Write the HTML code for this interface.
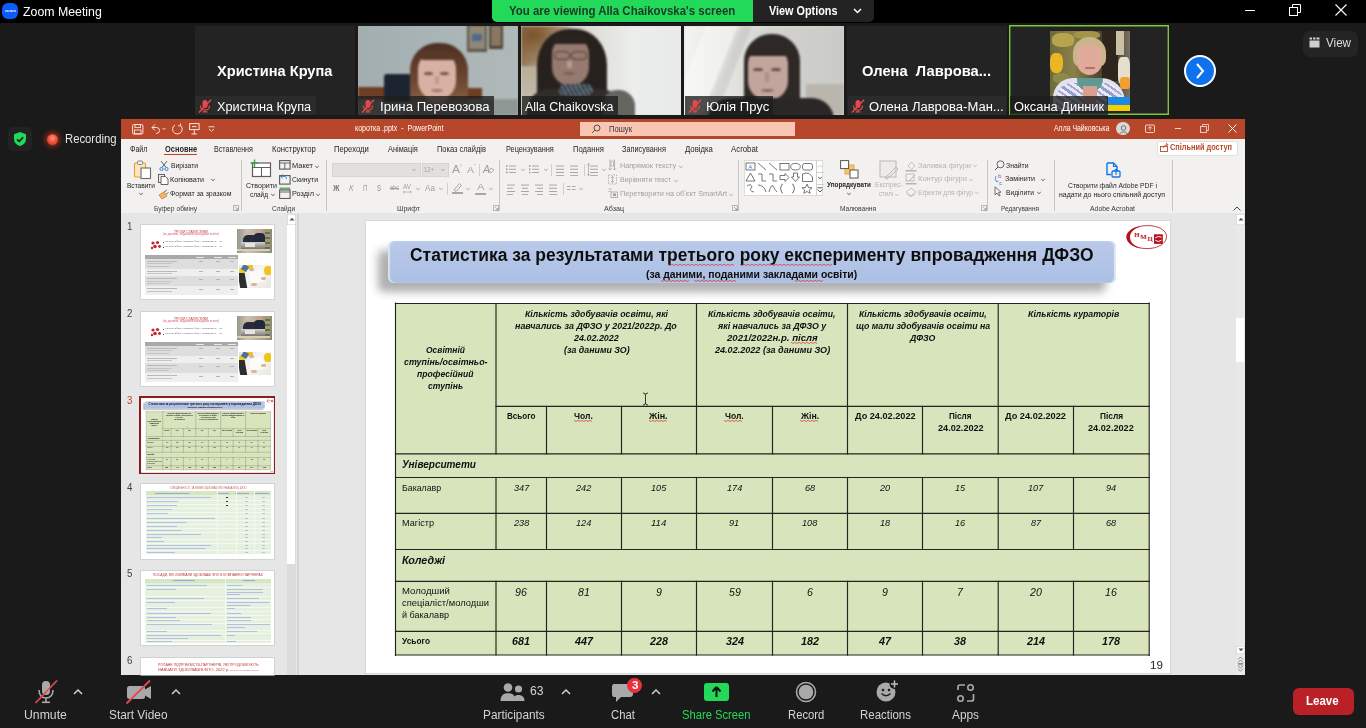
<!DOCTYPE html><html><head><meta charset="utf-8"><style>
html,body{margin:0;padding:0;}
body{width:1366px;height:728px;overflow:hidden;position:relative;background:#1a1a1a;font-family:"Liberation Sans",sans-serif;}
span{display:inline-block;}
</style></head><body>
<div style="position:absolute;left:0px;top:0px;width:1366px;height:23px;background:#000;"></div>
<div style="position:absolute;left:2px;top:3px;width:16px;height:16px;border-radius:6px;background:#0b5cff;"></div>
<span style="transform:scaleX(1.0523);position:absolute;left:4.5px;top:9.04px;font-family:'Liberation Sans', sans-serif;font-size:4px;line-height:4px;color:#fff;font-weight:700;white-space:nowrap;font-style:normal;transform-origin:0 0;">zoom</span>
<span style="transform:scaleX(1.0024);position:absolute;left:23px;top:5.57px;font-family:'Liberation Sans', sans-serif;font-size:12.3px;line-height:12.3px;color:#ffffff;font-weight:400;white-space:nowrap;font-style:normal;transform-origin:0 0;">Zoom Meeting</span>
<div style="position:absolute;left:492px;top:0;width:261px;height:22px;background:#23d959;border-bottom-left-radius:5px;"></div>
<span style="transform:scaleX(0.9319);position:absolute;left:509.3px;top:4.97px;font-family:'Liberation Sans', sans-serif;font-size:12.3px;line-height:12.3px;color:#1d3a26;font-weight:700;white-space:nowrap;font-style:normal;transform-origin:0 0;">You are viewing Alla Chaikovska&#39;s screen</span>
<div style="position:absolute;left:753px;top:0;width:121px;height:22px;background:#232323;border-bottom-right-radius:5px;"></div>
<span style="transform:scaleX(0.8819);position:absolute;left:769.3px;top:4.97px;font-family:'Liberation Sans', sans-serif;font-size:12.3px;line-height:12.3px;color:#ffffff;font-weight:700;white-space:nowrap;font-style:normal;transform-origin:0 0;">View Options</span>
<svg style="position:absolute;left:853px;top:8px;" width="9" height="6" viewBox="0 0 9 6"><polyline points="1,1 4.5,4.5 8,1" fill="none" stroke="#fff" stroke-width="1.5"/></svg>
<div style="position:absolute;left:1245px;top:10px;width:10px;height:1px;background:#fff;"></div>
<svg style="position:absolute;left:1289px;top:4px;" width="12" height="12" viewBox="0 0 12 12"><rect x="0.5" y="3.5" width="8" height="8" fill="none" stroke="#fff" stroke-width="1"/><polyline points="3.5,3.5 3.5,0.5 11.5,0.5 11.5,8.5 8.5,8.5" fill="none" stroke="#fff" stroke-width="1"/></svg>
<svg style="position:absolute;left:1335px;top:4px;" width="12" height="12" viewBox="0 0 12 12"><path d="M0.5 0.5 L11.5 11.5 M11.5 0.5 L0.5 11.5" stroke="#fff" stroke-width="1.1"/></svg>
<div style="position:absolute;left:8px;top:127px;width:24px;height:24px;border-radius:5px;background:#222;"></div>
<svg style="position:absolute;left:13px;top:131px;" width="14" height="16" viewBox="0 0 14 16"><path d="M7 1 L13 3.3 L13 8 C13 11.5 10.5 14 7 15 C3.5 14 1 11.5 1 8 L1 3.3 Z" fill="#23d959"/><polyline points="4,8.3 6.2,10.4 10.2,6.3" fill="none" stroke="#1a1a1a" stroke-width="1.6"/></svg>
<div style="position:absolute;left:46.5px;top:133.5px;width:11px;height:11px;border-radius:50%;background:radial-gradient(circle at 50% 40%,#ff9a86 0%,#f0503c 45%,#d8321f 100%);box-shadow:0 0 5px 2px rgba(220,60,20,0.55);"></div>
<span style="transform:scaleX(0.9038);position:absolute;left:64.5px;top:133.47px;font-family:'Liberation Sans', sans-serif;font-size:12.5px;line-height:12.5px;color:#e6e6e6;font-weight:400;white-space:nowrap;font-style:normal;transform-origin:0 0;">Recording</span>
<div style="position:absolute;left:0px;top:675px;width:1366px;height:53px;background:#1a1a1a;"></div>
<svg style="position:absolute;left:34px;top:679px;" width="26" height="26" viewBox="0 0 26 26"><rect x="8" y="2" width="8" height="14" rx="4" fill="#a9a9a9"/><path d="M5 11 C5 16 8 19 12 19 C16 19 19 16 19 11" fill="none" stroke="#a9a9a9" stroke-width="1.6"/><rect x="11.2" y="19" width="1.6" height="4" fill="#a9a9a9"/><rect x="8" y="22.5" width="8" height="1.6" fill="#a9a9a9"/><line x1="1.5" y1="24" x2="23" y2="1.5" stroke="#e5484d" stroke-width="1.8"/></svg>
<svg style="position:absolute;left:73px;top:689px;" width="10" height="6" viewBox="0 0 10 6"><polyline points="1,5 5,1 9,5" fill="none" stroke="#cfcfcf" stroke-width="1.5"/></svg>
<span style="transform:scaleX(0.9799);position:absolute;left:23.9px;top:709.17px;font-family:'Liberation Sans', sans-serif;font-size:12.5px;line-height:12.5px;color:#d4d4d4;font-weight:400;white-space:nowrap;font-style:normal;transform-origin:0 0;">Unmute</span>
<svg style="position:absolute;left:125px;top:679px;" width="28" height="26" viewBox="0 0 28 26"><rect x="2" y="7" width="18" height="13" rx="2.5" fill="#a9a9a9"/><path d="M20 10.5 L26 7 L26 20 L20 16.5 Z" fill="#a9a9a9"/><line x1="1.5" y1="24.5" x2="25" y2="1.5" stroke="#e5484d" stroke-width="1.8"/></svg>
<svg style="position:absolute;left:171px;top:689px;" width="10" height="6" viewBox="0 0 10 6"><polyline points="1,5 5,1 9,5" fill="none" stroke="#cfcfcf" stroke-width="1.5"/></svg>
<span style="transform:scaleX(0.9493);position:absolute;left:109.3px;top:709.17px;font-family:'Liberation Sans', sans-serif;font-size:12.5px;line-height:12.5px;color:#d4d4d4;font-weight:400;white-space:nowrap;font-style:normal;transform-origin:0 0;">Start Video</span>
<svg style="position:absolute;left:499px;top:682px;" width="28" height="20" viewBox="0 0 28 20"><circle cx="9" cy="5.5" r="4.3" fill="#a9a9a9"/><circle cx="19.5" cy="7" r="3.6" fill="#a9a9a9"/><path d="M1.5 19 C1.5 13 5 11.3 9 11.3 C13 11.3 16.5 13 16.5 19 Z" fill="#a9a9a9"/><path d="M14 19 C14 15 16 13 19.5 13 C23 13 25.5 15 25.5 19 Z" fill="#a9a9a9"/></svg>
<span style="transform:scaleX(0.9708);position:absolute;left:529.5px;top:684.88px;font-family:'Liberation Sans', sans-serif;font-size:12.5px;line-height:12.5px;color:#d4d4d4;font-weight:400;white-space:nowrap;font-style:normal;transform-origin:0 0;">63</span>
<svg style="position:absolute;left:561px;top:689px;" width="10" height="6" viewBox="0 0 10 6"><polyline points="1,5 5,1 9,5" fill="none" stroke="#cfcfcf" stroke-width="1.5"/></svg>
<span style="transform:scaleX(0.9447);position:absolute;left:482.5px;top:709.17px;font-family:'Liberation Sans', sans-serif;font-size:12.5px;line-height:12.5px;color:#d4d4d4;font-weight:400;white-space:nowrap;font-style:normal;transform-origin:0 0;">Participants</span>
<svg style="position:absolute;left:611px;top:682px;" width="24" height="22" viewBox="0 0 24 22"><path d="M3 2 L19 2 Q22 2 22 5 L22 12 Q22 15 19 15 L10 15 L5 20 L5 15 L3 15 Q1 15 1 12 L1 5 Q1 2 3 2 Z" fill="#a9a9a9"/></svg>
<div style="position:absolute;left:627px;top:677.5px;width:15px;height:15px;border-radius:50%;background:#e8313a;"></div>
<span style="transform:scaleX(1.1123);position:absolute;left:631.5px;top:679.86px;font-family:'Liberation Sans', sans-serif;font-size:10.5px;line-height:10.5px;color:#fff;font-weight:700;white-space:nowrap;font-style:normal;transform-origin:0 0;">3</span>
<svg style="position:absolute;left:651px;top:689px;" width="10" height="6" viewBox="0 0 10 6"><polyline points="1,5 5,1 9,5" fill="none" stroke="#cfcfcf" stroke-width="1.5"/></svg>
<span style="transform:scaleX(0.9013);position:absolute;left:611.2px;top:709.17px;font-family:'Liberation Sans', sans-serif;font-size:12.5px;line-height:12.5px;color:#d4d4d4;font-weight:400;white-space:nowrap;font-style:normal;transform-origin:0 0;">Chat</span>
<div style="position:absolute;left:704px;top:683px;width:25px;height:18px;border-radius:3px;background:#23d959;"></div>
<svg style="position:absolute;left:710px;top:685px;" width="13" height="14" viewBox="0 0 13 14"><path d="M6.5 2 L10.5 6.5 M6.5 2 L2.5 6.5 M6.5 2 L6.5 12" stroke="#111" stroke-width="2" fill="none"/></svg>
<span style="transform:scaleX(0.8962);position:absolute;left:682.2px;top:709.17px;font-family:'Liberation Sans', sans-serif;font-size:12.5px;line-height:12.5px;color:#23d959;font-weight:400;white-space:nowrap;font-style:normal;transform-origin:0 0;">Share Screen</span>
<svg style="position:absolute;left:795px;top:681px;" width="22" height="22" viewBox="0 0 22 22"><circle cx="11" cy="11" r="9.5" fill="none" stroke="#a9a9a9" stroke-width="1.6"/><circle cx="11" cy="11" r="7.3" fill="#a9a9a9"/></svg>
<span style="transform:scaleX(0.9008);position:absolute;left:787.5px;top:709.17px;font-family:'Liberation Sans', sans-serif;font-size:12.5px;line-height:12.5px;color:#d4d4d4;font-weight:400;white-space:nowrap;font-style:normal;transform-origin:0 0;">Record</span>
<svg style="position:absolute;left:876px;top:679px;" width="24" height="24" viewBox="0 0 24 24"><circle cx="10" cy="13" r="9.5" fill="#a9a9a9"/><circle cx="7" cy="11" r="1.3" fill="#1a1a1a"/><circle cx="13" cy="11" r="1.3" fill="#1a1a1a"/><path d="M5.5 14.5 Q10 19 14.5 14.5" stroke="#1a1a1a" stroke-width="1.4" fill="none"/><circle cx="18.5" cy="5" r="5" fill="#1a1a1a"/><path d="M18.5 1.5 L18.5 8.5 M15 5 L22 5" stroke="#bdbdbd" stroke-width="1.5"/></svg>
<span style="transform:scaleX(0.9156);position:absolute;left:860.3px;top:709.17px;font-family:'Liberation Sans', sans-serif;font-size:12.5px;line-height:12.5px;color:#d4d4d4;font-weight:400;white-space:nowrap;font-style:normal;transform-origin:0 0;">Reactions</span>
<svg style="position:absolute;left:956px;top:683px;" width="20" height="20" viewBox="0 0 20 20"><path d="M2 7 L2 4 Q2 2 4 2 L9 2" fill="none" stroke="#a9a9a9" stroke-width="1.7"/><path d="M17.5 11 L17.5 16 Q17.5 18 15.5 18 L11 18" fill="none" stroke="#a9a9a9" stroke-width="1.7"/><circle cx="14.5" cy="4.5" r="2.7" fill="none" stroke="#a9a9a9" stroke-width="1.6"/><circle cx="4.5" cy="15.5" r="2.7" fill="none" stroke="#a9a9a9" stroke-width="1.6"/></svg>
<span style="transform:scaleX(0.9474);position:absolute;left:952.3px;top:709.17px;font-family:'Liberation Sans', sans-serif;font-size:12.5px;line-height:12.5px;color:#d4d4d4;font-weight:400;white-space:nowrap;font-style:normal;transform-origin:0 0;">Apps</span>
<div style="position:absolute;left:1293px;top:688px;width:61px;height:27px;border-radius:6px;background:#b92126;"></div>
<span style="transform:scaleX(0.9609);position:absolute;left:1306.3px;top:694.82px;font-family:'Liberation Sans', sans-serif;font-size:12px;line-height:12px;color:#fff;font-weight:700;white-space:nowrap;font-style:normal;transform-origin:0 0;">Leave</span>
<div style="position:absolute;left:195px;top:26px;width:160px;height:89px;background:#232323;"></div>
<span style="transform:scaleX(1.0054);position:absolute;left:216.9px;top:63.70px;font-family:'Liberation Sans', sans-serif;font-size:14.5px;line-height:14.5px;color:#fff;font-weight:700;white-space:nowrap;font-style:normal;transform-origin:0 0;">Христина Крупа</span>
<div style="position:absolute;left:195px;top:96px;width:121px;height:19px;background:#2b2b2b;"></div>
<svg style="position:absolute;left:198px;top:99px;" width="14" height="14" viewBox="0 0 14 14"><rect x="4.5" y="1" width="5" height="8" rx="2.5" fill="#e5484d"/><path d="M2.5 6.5 C2.5 9.5 4.5 11 7 11 C9.5 11 11.5 9.5 11.5 6.5" fill="none" stroke="#e5484d" stroke-width="1.2"/><rect x="6.4" y="11" width="1.2" height="2" fill="#e5484d"/><rect x="4.5" y="12.3" width="5" height="1.2" fill="#e5484d"/><line x1="1" y1="13.5" x2="13" y2="0.8" stroke="#e5484d" stroke-width="1.5"/></svg>
<span style="transform:scaleX(1.0159);position:absolute;left:216.9px;top:100.97px;font-family:'Liberation Sans', sans-serif;font-size:12.5px;line-height:12.5px;color:#fff;font-weight:400;white-space:nowrap;font-style:normal;transform-origin:0 0;">Христина Крупа</span>
<div style="position:absolute;left:358px;top:26px;width:160px;height:89px;overflow:hidden;background:#a7b2ae;"><div style="position:absolute;left:-4px;top:-4px;width:168px;height:97px;filter:blur(1px);"><div style="position:absolute;left:4px;top:4px;width:160px;height:89px;">
<div style="position:absolute;left:0;top:0;width:160px;height:89px;background:linear-gradient(90deg,#a3aeb1 0%,#aab5b7 55%,#b0b9b9 100%);"></div>
<div style="position:absolute;left:109px;top:-2px;width:20px;height:28px;background:#5e564a;"></div>
<div style="position:absolute;left:111px;top:0px;width:16px;height:23px;background:#8d8878;"></div>
<div style="position:absolute;left:114px;top:8px;width:10px;height:7px;background:#4f6a8c;"></div>
<div style="position:absolute;left:131px;top:-2px;width:14px;height:25px;background:#4e4438;"></div>
<div style="position:absolute;left:133px;top:0px;width:10px;height:20px;background:#8a7762;"></div>
<div style="position:absolute;left:0;top:61px;width:60px;height:12px;background:#6e3e24;"></div>
<div style="position:absolute;left:100px;top:62px;width:24px;height:11px;background:#6e3e24;"></div>
<div style="position:absolute;left:0;top:73px;width:160px;height:16px;background:#8f9794;"></div>
<div style="position:absolute;left:26px;top:48px;width:27px;height:28px;background:#1c2331;border-radius:3px 3px 0 0;"></div>
<div style="position:absolute;left:52px;top:17px;width:58px;height:76px;background:linear-gradient(180deg,#4d2f22 0%,#6a4430 45%,#9b6e50 100%);border-radius:27px 27px 10px 10px;"></div>
<div style="position:absolute;left:60px;top:26px;width:38px;height:48px;background:#d7b2a4;border-radius:17px 17px 19px 19px;"></div>
<div style="position:absolute;left:62px;top:25px;width:34px;height:9px;background:#5a3828;border-radius:17px 17px 4px 14px;"></div>
<div style="position:absolute;left:66px;top:46px;width:9px;height:3px;background:#6e5048;border-radius:50%;"></div>
<div style="position:absolute;left:82px;top:46px;width:9px;height:3px;background:#6e5048;border-radius:50%;"></div>
<div style="position:absolute;left:77px;top:50px;width:4px;height:8px;background:#c89a8a;"></div>
<div style="position:absolute;left:73px;top:63px;width:12px;height:3px;background:#a86e68;border-radius:50%;"></div>
<div style="position:absolute;left:44px;top:74px;width:72px;height:20px;background:#7d7774;border-radius:16px 16px 0 0;"></div>
<div style="position:absolute;left:68px;top:70px;width:22px;height:8px;background:#c79a8a;border-radius:0 0 10px 10px;"></div>
</div></div>
</div>
<div style="position:absolute;left:358px;top:96px;width:136px;height:19px;background:rgba(30,30,30,0.78);"></div>
<svg style="position:absolute;left:361px;top:99px;" width="14" height="14" viewBox="0 0 14 14"><rect x="4.5" y="1" width="5" height="8" rx="2.5" fill="#e5484d"/><path d="M2.5 6.5 C2.5 9.5 4.5 11 7 11 C9.5 11 11.5 9.5 11.5 6.5" fill="none" stroke="#e5484d" stroke-width="1.2"/><rect x="6.4" y="11" width="1.2" height="2" fill="#e5484d"/><rect x="4.5" y="12.3" width="5" height="1.2" fill="#e5484d"/><line x1="1" y1="13.5" x2="13" y2="0.8" stroke="#e5484d" stroke-width="1.5"/></svg>
<span style="transform:scaleX(1.0550);position:absolute;left:380px;top:100.97px;font-family:'Liberation Sans', sans-serif;font-size:12.5px;line-height:12.5px;color:#fff;font-weight:400;white-space:nowrap;font-style:normal;transform-origin:0 0;">Ірина Перевозова</span>
<div style="position:absolute;left:521px;top:26px;width:160px;height:89px;overflow:hidden;background:#dfe1dd;"><div style="position:absolute;left:-4px;top:-4px;width:168px;height:97px;filter:blur(1.2px);"><div style="position:absolute;left:4px;top:4px;width:160px;height:89px;">
<div style="position:absolute;left:0;top:0;width:160px;height:89px;background:linear-gradient(90deg,#8f7656 0%,#b8a78c 18%,#dcdcd6 42%,#eceeec 70%,#e8ebea 100%);"></div>
<div style="position:absolute;left:0;top:0;width:50px;height:36px;background:radial-gradient(ellipse at 25% 25%,#7a552e 0%,rgba(140,100,60,0.5) 50%,rgba(160,130,90,0) 85%);"></div>
<div style="position:absolute;left:0;top:40px;width:25px;height:49px;background:linear-gradient(180deg,#b7ad98 0%,#c9c3b6 100%);"></div>
<div style="position:absolute;left:16px;top:3px;width:70px;height:90px;background:#27211e;border-radius:45% 45% 12px 12px / 40% 40% 12px 12px;"></div>
<div style="position:absolute;left:31px;top:12px;width:37px;height:48px;background:#967a6f;border-radius:16px 16px 19px 19px;"></div>
<div style="position:absolute;left:31px;top:9px;width:34px;height:9px;background:#2a2320;border-radius:16px 16px 6px 12px;"></div>
<div style="position:absolute;left:33px;top:25px;width:14px;height:7px;border:1px solid #4e3d36;border-radius:40%;"></div>
<div style="position:absolute;left:50px;top:25px;width:14px;height:7px;border:1px solid #4e3d36;border-radius:40%;"></div>
<div style="position:absolute;left:46px;top:35px;width:5px;height:7px;background:#b89a8e;"></div>
<div style="position:absolute;left:42px;top:46px;width:12px;height:3px;background:#7d5a55;border-radius:50%;"></div>
<div style="position:absolute;left:6px;top:63px;width:96px;height:30px;background:#302d2b;border-radius:22px 22px 0 0;"></div>
<div style="position:absolute;left:82px;top:64px;width:32px;height:30px;background:#66645f;border-radius:14px 16px 0 0;"></div>
<div style="position:absolute;left:38px;top:58px;width:34px;height:12px;background:repeating-linear-gradient(60deg,#2b343c 0 2px,#6b7886 2px 4px);border-radius:6px;"></div>
</div></div>
</div>
<div style="position:absolute;left:522px;top:96px;width:96px;height:19px;background:rgba(30,30,30,0.78);"></div>
<span style="transform:scaleX(0.9951);position:absolute;left:525px;top:100.97px;font-family:'Liberation Sans', sans-serif;font-size:12.5px;line-height:12.5px;color:#fff;font-weight:400;white-space:nowrap;font-style:normal;transform-origin:0 0;">Alla Chaikovska</span>
<div style="position:absolute;left:684px;top:26px;width:160px;height:89px;overflow:hidden;background:#d6d6d3;"><div style="position:absolute;left:-4px;top:-4px;width:168px;height:97px;filter:blur(1.1px);"><div style="position:absolute;left:4px;top:4px;width:160px;height:89px;">
<div style="position:absolute;left:0;top:0;width:160px;height:89px;background:linear-gradient(90deg,#f3f3f1 0%,#e6e6e3 25%,#d2d2cf 55%,#cacac6 100%);"></div>
<div style="position:absolute;left:4px;top:0;width:36px;height:89px;background:rgba(255,255,255,0.4);transform:skewX(-22deg);"></div>
<div style="position:absolute;left:36px;top:0;width:14px;height:89px;background:rgba(160,160,155,0.25);transform:skewX(-22deg);"></div>
<div style="position:absolute;left:122px;top:58px;width:38px;height:31px;background:#bab6ad;"></div>
<div style="position:absolute;left:60px;top:8px;width:56px;height:84px;background:#2e2927;border-radius:27px 27px 8px 8px;"></div>
<div style="position:absolute;left:64px;top:22px;width:40px;height:52px;background:#c2a69d;border-radius:16px 16px 19px 19px;"></div>
<div style="position:absolute;left:64px;top:20px;width:40px;height:10px;background:#2e2927;border-radius:20px 20px 10px 10px;"></div>
<div style="position:absolute;left:69px;top:42px;width:10px;height:3px;background:#5e4a45;border-radius:50%;"></div>
<div style="position:absolute;left:87px;top:42px;width:10px;height:3px;background:#5e4a45;border-radius:50%;"></div>
<div style="position:absolute;left:81px;top:46px;width:4px;height:10px;background:#b09088;"></div>
<div style="position:absolute;left:77px;top:63px;width:13px;height:3px;background:#8a625c;border-radius:50%;"></div>
<div style="position:absolute;left:24px;top:72px;width:126px;height:22px;background:#2a2726;border-radius:24px 24px 0 0;"></div>
</div></div>
</div>
<div style="position:absolute;left:685px;top:96px;width:88px;height:19px;background:rgba(30,30,30,0.78);"></div>
<svg style="position:absolute;left:688px;top:99px;" width="14" height="14" viewBox="0 0 14 14"><rect x="4.5" y="1" width="5" height="8" rx="2.5" fill="#e5484d"/><path d="M2.5 6.5 C2.5 9.5 4.5 11 7 11 C9.5 11 11.5 9.5 11.5 6.5" fill="none" stroke="#e5484d" stroke-width="1.2"/><rect x="6.4" y="11" width="1.2" height="2" fill="#e5484d"/><rect x="4.5" y="12.3" width="5" height="1.2" fill="#e5484d"/><line x1="1" y1="13.5" x2="13" y2="0.8" stroke="#e5484d" stroke-width="1.5"/></svg>
<span style="transform:scaleX(1.0438);position:absolute;left:705.8px;top:100.97px;font-family:'Liberation Sans', sans-serif;font-size:12.5px;line-height:12.5px;color:#fff;font-weight:400;white-space:nowrap;font-style:normal;transform-origin:0 0;">Юлія Прус</span>
<div style="position:absolute;left:847px;top:26px;width:160px;height:89px;background:#232323;"></div>
<span style="transform:scaleX(1.0145);position:absolute;left:862px;top:63.70px;font-family:'Liberation Sans', sans-serif;font-size:14.5px;line-height:14.5px;color:#fff;font-weight:700;white-space:nowrap;font-style:normal;transform-origin:0 0;">Олена&nbsp; Лаврова...</span>
<div style="position:absolute;left:848px;top:96px;width:158px;height:19px;background:#2b2b2b;"></div>
<svg style="position:absolute;left:851px;top:99px;" width="14" height="14" viewBox="0 0 14 14"><rect x="4.5" y="1" width="5" height="8" rx="2.5" fill="#e5484d"/><path d="M2.5 6.5 C2.5 9.5 4.5 11 7 11 C9.5 11 11.5 9.5 11.5 6.5" fill="none" stroke="#e5484d" stroke-width="1.2"/><rect x="6.4" y="11" width="1.2" height="2" fill="#e5484d"/><rect x="4.5" y="12.3" width="5" height="1.2" fill="#e5484d"/><line x1="1" y1="13.5" x2="13" y2="0.8" stroke="#e5484d" stroke-width="1.5"/></svg>
<span style="transform:scaleX(1.0418);position:absolute;left:869px;top:100.97px;font-family:'Liberation Sans', sans-serif;font-size:12.5px;line-height:12.5px;color:#fff;font-weight:400;white-space:nowrap;font-style:normal;transform-origin:0 0;">Олена Лаврова-Ман...</span>
<div style="position:absolute;left:1009px;top:25px;width:160px;height:90px;border:1px solid #7ec63a;background:#232323;box-sizing:border-box;box-shadow:inset 0 0 0 0.4px #7ec63a;"></div>
<div style="position:absolute;left:1050px;top:31px;width:80px;height:80px;overflow:hidden;background:#4a4632;">
<div style="position:absolute;left:-4px;top:-4px;width:88px;height:88px;filter:blur(0.7px);"><div style="position:absolute;left:4px;top:4px;width:80px;height:80px;">
<div style="position:absolute;left:0;top:0;width:80px;height:80px;background:linear-gradient(90deg,#6e6a3e 0%,#8c8048 30%,#5c5238 55%,#3a3024 75%,#7a7262 100%);"></div>
<div style="position:absolute;left:2px;top:2px;width:22px;height:14px;background:#b7a54e;border-radius:40%;"></div>
<div style="position:absolute;left:24px;top:0px;width:26px;height:8px;background:#a09548;border-radius:40%;"></div>
<div style="position:absolute;left:0;top:22px;width:13px;height:20px;background:#eab722;border-radius:40%;"></div>
<div style="position:absolute;left:3px;top:42px;width:16px;height:10px;background:#8c8a4a;border-radius:40%;"></div>
<div style="position:absolute;left:52px;top:0;width:16px;height:50px;background:#2e261c;"></div>
<div style="position:absolute;left:66px;top:0;width:8px;height:24px;background:#c9c0a6;"></div>
<div style="position:absolute;left:68px;top:26px;width:12px;height:28px;background:#e6dfcf;border-radius:30%;"></div>
<div style="position:absolute;left:70px;top:46px;width:10px;height:12px;background:#f0a030;border-radius:30%;"></div>
<div style="position:absolute;left:23px;top:6px;width:33px;height:30px;background:#c9b58c;border-radius:16px 16px 8px 8px;"></div>
<div style="position:absolute;left:27px;top:14px;width:25px;height:30px;background:#e0ab9b;border-radius:9px 9px 13px 13px;"></div>
<div style="position:absolute;left:35px;top:36px;width:10px;height:2px;background:#b86f66;border-radius:2px;"></div>
<div style="position:absolute;left:3px;top:47px;width:72px;height:35px;background:#dfe3f0;border-radius:20px 24px 0 0;"></div>
<div style="position:absolute;left:6px;top:52px;width:66px;height:28px;background:repeating-linear-gradient(35deg,#5266b8 0 3px,#e9ecf6 3px 6px,#8a6ab0 6px 8px,#f0f2f8 8px 11px);opacity:0.55;border-radius:16px 16px 0 0;"></div>
<div style="position:absolute;left:27px;top:47px;width:26px;height:14px;background:#5f9a92;border-radius:0 0 13px 13px;"></div>
<div style="position:absolute;left:33px;top:55px;width:14px;height:18px;background:#d9a090;border-radius:0 0 7px 7px;"></div>
</div></div>
<div style="position:absolute;left:57px;top:66px;width:23px;height:8px;background:#1e88e5;"></div>
<div style="position:absolute;left:57px;top:74px;width:23px;height:6px;background:#f5d000;"></div>
</div>
<div style="position:absolute;left:1010px;top:96px;width:98px;height:19px;background:rgba(30,30,30,0.78);"></div>
<span style="transform:scaleX(1.0299);position:absolute;left:1014.4px;top:100.97px;font-family:'Liberation Sans', sans-serif;font-size:12.5px;line-height:12.5px;color:#fff;font-weight:400;white-space:nowrap;font-style:normal;transform-origin:0 0;">Оксана Динник</span>
<div style="position:absolute;left:1184px;top:55px;width:28px;height:28px;border-radius:50%;background:#0e72ed;border:2.5px solid #fff;"></div>
<svg style="position:absolute;left:1193px;top:62px;" width="14" height="18" viewBox="0 0 14 18"><polyline points="4,2 10,9 4,16" fill="none" stroke="#fff" stroke-width="2"/></svg>
<div style="position:absolute;left:1303px;top:31px;width:55px;height:26px;border-radius:7px;background:#242424;"></div>
<svg style="position:absolute;left:1309px;top:37px;" width="12" height="12" viewBox="0 0 12 12"><rect x="0.5" y="3.5" width="10" height="7" fill="#cfcfcf"/><rect x="0.5" y="0.5" width="2.5" height="2" fill="#cfcfcf"/><rect x="4" y="0.5" width="2.5" height="2" fill="#cfcfcf"/><rect x="7.5" y="0.5" width="3" height="2" fill="#cfcfcf"/></svg>
<span style="transform:scaleX(0.9691);position:absolute;left:1326px;top:37.12px;font-family:'Liberation Sans', sans-serif;font-size:12px;line-height:12px;color:#dcdcdc;font-weight:400;white-space:nowrap;font-style:normal;transform-origin:0 0;">View</span>
<div style="position:absolute;left:121px;top:119px;width:1124px;height:556px;background:#e6e6e6;"></div>
<div style="position:absolute;left:121px;top:119px;width:1124px;height:20px;background:#b7472a;"></div>
<svg style="position:absolute;left:132px;top:124px;" width="12" height="11" viewBox="0 0 12 11"><rect x="0.6" y="0.6" width="10.3" height="9.3" rx="1" fill="none" stroke="#fbe3da" stroke-width="1"/><rect x="3" y="0.6" width="5.5" height="3" fill="none" stroke="#fbe3da" stroke-width="0.9"/><rect x="2.5" y="6" width="6.5" height="3.9" fill="none" stroke="#fbe3da" stroke-width="0.9"/></svg>
<svg style="position:absolute;left:150px;top:123px;" width="17" height="12" viewBox="0 0 17 12"><path d="M2 4.5 L5 1.5 M2 4.5 L5 7.5 M2 4.5 L6.5 4.5 Q9.5 4.5 9.5 7.5 Q9.5 10.5 6 10.5" fill="none" stroke="#fbe3da" stroke-width="1"/><polyline points="12.5,5 14,6.5 15.5,5" fill="none" stroke="#fbe3da" stroke-width="0.9"/></svg>
<svg style="position:absolute;left:171px;top:123px;" width="13" height="12" viewBox="0 0 13 12"><path d="M9.5 2.5 A4.8 4.8 0 1 1 4 2" fill="none" stroke="#fbe3da" stroke-width="1"/><polyline points="9.5,0.5 9.5,2.8 7.2,2.8" fill="none" stroke="#fbe3da" stroke-width="1"/></svg>
<svg style="position:absolute;left:189px;top:123px;" width="11" height="12" viewBox="0 0 11 12"><rect x="0.6" y="0.6" width="9.5" height="6" fill="none" stroke="#fbe3da" stroke-width="1"/><path d="M5.3 6.6 L5.3 11 M2.5 11 L8 11 M3 3.6 L7.5 3.6" stroke="#fbe3da" stroke-width="1"/></svg>
<svg style="position:absolute;left:208px;top:126px;" width="7" height="6" viewBox="0 0 7 6"><path d="M0.5 0.8 L6.5 0.8 M1 3 L3.5 5.3 L6 3" fill="none" stroke="#fbe3da" stroke-width="0.9"/></svg>
<span style="transform:scaleX(0.8190);position:absolute;left:355px;top:124.39px;font-family:'Liberation Sans', sans-serif;font-size:8.6px;line-height:8.6px;color:#ffffff;font-weight:400;white-space:nowrap;font-style:normal;transform-origin:0 0;">коротка .pptx&nbsp; -&nbsp; PowerPoint</span>
<div style="position:absolute;left:580px;top:122px;width:215px;height:13.5px;background:#f9c6b4;"></div>
<svg style="position:absolute;left:591px;top:124px;" width="10" height="10" viewBox="0 0 10 10"><circle cx="6" cy="4" r="3" fill="none" stroke="#444" stroke-width="0.9"/><line x1="1" y1="9" x2="3.8" y2="6.2" stroke="#444" stroke-width="0.9"/></svg>
<span style="transform:scaleX(0.8873);position:absolute;left:609px;top:124.59px;font-family:'Liberation Sans', sans-serif;font-size:8.6px;line-height:8.6px;color:#333;font-weight:400;white-space:nowrap;font-style:normal;transform-origin:0 0;">Пошук</span>
<span style="transform:scaleX(0.8033);position:absolute;left:1054.3px;top:124.39px;font-family:'Liberation Sans', sans-serif;font-size:8.6px;line-height:8.6px;color:#ffffff;font-weight:400;white-space:nowrap;font-style:normal;transform-origin:0 0;">Алла Чайковська</span>
<div style="position:absolute;left:1116.4px;top:121.8px;width:13.7px;height:13.7px;border-radius:50%;background:#d9d9d9;"></div>
<svg style="position:absolute;left:1117px;top:122.5px;" width="13" height="13" viewBox="0 0 13 13"><circle cx="6.5" cy="5" r="2.3" fill="none" stroke="#666" stroke-width="0.9"/><path d="M2.5 11 Q6.5 6.5 10.5 11" fill="none" stroke="#666" stroke-width="0.9"/></svg>
<svg style="position:absolute;left:1145px;top:124px;" width="10" height="10" viewBox="0 0 10 10"><rect x="0.5" y="1" width="9" height="7.5" rx="1" fill="none" stroke="#fbe3da" stroke-width="0.9"/><path d="M5 6.5 L5 3 M3 4.5 L5 2.5 L7 4.5" fill="none" stroke="#fbe3da" stroke-width="0.9"/></svg>
<div style="position:absolute;left:1175px;top:128px;width:6px;height:1px;background:#f3d2c6;"></div>
<svg style="position:absolute;left:1200px;top:124px;" width="9" height="9" viewBox="0 0 9 9"><rect x="0.5" y="2.5" width="6" height="6" fill="none" stroke="#f3d2c6" stroke-width="0.9"/><polyline points="2.5,2.5 2.5,0.5 8.5,0.5 8.5,6.5 6.5,6.5" fill="none" stroke="#f3d2c6" stroke-width="0.9"/></svg>
<svg style="position:absolute;left:1228px;top:124px;" width="9" height="9" viewBox="0 0 9 9"><path d="M0.5 0.5 L8.5 8.5 M8.5 0.5 L0.5 8.5" stroke="#fff" stroke-width="1"/></svg>
<div style="position:absolute;left:121px;top:139px;width:1124px;height:74px;background:#f3f1ef;"></div>
<div style="position:absolute;left:121px;top:212.5px;width:1124px;height:1px;background:#d6d3d0;"></div>
<span style="transform:scaleX(0.8193);position:absolute;left:129.7px;top:144.84px;font-family:'Liberation Sans', sans-serif;font-size:8.7px;line-height:8.7px;color:#262626;font-weight:400;white-space:nowrap;font-style:normal;transform-origin:0 0;">Файл</span>
<span style="transform:scaleX(0.8195);position:absolute;left:214.3px;top:144.84px;font-family:'Liberation Sans', sans-serif;font-size:8.7px;line-height:8.7px;color:#262626;font-weight:400;white-space:nowrap;font-style:normal;transform-origin:0 0;">Вставлення</span>
<span style="transform:scaleX(0.8860);position:absolute;left:271.7px;top:144.84px;font-family:'Liberation Sans', sans-serif;font-size:8.7px;line-height:8.7px;color:#262626;font-weight:400;white-space:nowrap;font-style:normal;transform-origin:0 0;">Конструктор</span>
<span style="transform:scaleX(0.8867);position:absolute;left:334.3px;top:144.84px;font-family:'Liberation Sans', sans-serif;font-size:8.7px;line-height:8.7px;color:#262626;font-weight:400;white-space:nowrap;font-style:normal;transform-origin:0 0;">Переходи</span>
<span style="transform:scaleX(0.8530);position:absolute;left:388px;top:144.84px;font-family:'Liberation Sans', sans-serif;font-size:8.7px;line-height:8.7px;color:#262626;font-weight:400;white-space:nowrap;font-style:normal;transform-origin:0 0;">Анімація</span>
<span style="transform:scaleX(0.8591);position:absolute;left:437.1px;top:144.84px;font-family:'Liberation Sans', sans-serif;font-size:8.7px;line-height:8.7px;color:#262626;font-weight:400;white-space:nowrap;font-style:normal;transform-origin:0 0;">Показ слайдів</span>
<span style="transform:scaleX(0.8439);position:absolute;left:506.4px;top:144.84px;font-family:'Liberation Sans', sans-serif;font-size:8.7px;line-height:8.7px;color:#262626;font-weight:400;white-space:nowrap;font-style:normal;transform-origin:0 0;">Рецензування</span>
<span style="transform:scaleX(0.8776);position:absolute;left:573.2px;top:144.84px;font-family:'Liberation Sans', sans-serif;font-size:8.7px;line-height:8.7px;color:#262626;font-weight:400;white-space:nowrap;font-style:normal;transform-origin:0 0;">Подання</span>
<span style="transform:scaleX(0.8445);position:absolute;left:622.4px;top:144.84px;font-family:'Liberation Sans', sans-serif;font-size:8.7px;line-height:8.7px;color:#262626;font-weight:400;white-space:nowrap;font-style:normal;transform-origin:0 0;">Записування</span>
<span style="transform:scaleX(0.8924);position:absolute;left:685px;top:144.84px;font-family:'Liberation Sans', sans-serif;font-size:8.7px;line-height:8.7px;color:#262626;font-weight:400;white-space:nowrap;font-style:normal;transform-origin:0 0;">Довідка</span>
<span style="transform:scaleX(0.9014);position:absolute;left:730.7px;top:144.84px;font-family:'Liberation Sans', sans-serif;font-size:8.7px;line-height:8.7px;color:#262626;font-weight:400;white-space:nowrap;font-style:normal;transform-origin:0 0;">Acrobat</span>
<span style="transform:scaleX(0.8572);position:absolute;left:164.5px;top:144.84px;font-family:'Liberation Sans', sans-serif;font-size:8.7px;line-height:8.7px;color:#262626;font-weight:700;white-space:nowrap;font-style:normal;transform-origin:0 0;">Основне</span>
<div style="position:absolute;left:164.3px;top:153.6px;width:32.7px;height:1.5px;background:#c43e1c;"></div>
<div style="position:absolute;left:1157px;top:141px;width:79px;height:12.5px;background:#fff;border:0.6px solid #e3e0dd;border-radius:2px;"></div>
<svg style="position:absolute;left:1160px;top:143px;" width="9" height="9" viewBox="0 0 9 9"><rect x="0.5" y="3.5" width="7" height="5" fill="none" stroke="#b7472a" stroke-width="0.9"/><path d="M3 5 Q4 2 7.5 1.5 M6 0.3 L7.8 1.5 L6.4 3.2" fill="none" stroke="#b7472a" stroke-width="0.9"/></svg>
<span style="transform:scaleX(0.8173);position:absolute;left:1170px;top:143.49px;font-family:'Liberation Sans', sans-serif;font-size:9px;line-height:9px;color:#b7472a;font-weight:700;white-space:nowrap;font-style:normal;transform-origin:0 0;">Спільний доступ</span>
<span style="transform:scaleX(0.8611);position:absolute;left:154px;top:204.98px;font-family:'Liberation Sans', sans-serif;font-size:7.8px;line-height:7.8px;color:#3b3a39;font-weight:400;white-space:nowrap;font-style:normal;transform-origin:0 0;">Буфер обміну</span>
<span style="transform:scaleX(0.8279);position:absolute;left:272px;top:204.98px;font-family:'Liberation Sans', sans-serif;font-size:7.8px;line-height:7.8px;color:#3b3a39;font-weight:400;white-space:nowrap;font-style:normal;transform-origin:0 0;">Слайди</span>
<span style="transform:scaleX(0.8965);position:absolute;left:397px;top:204.98px;font-family:'Liberation Sans', sans-serif;font-size:7.8px;line-height:7.8px;color:#3b3a39;font-weight:400;white-space:nowrap;font-style:normal;transform-origin:0 0;">Шрифт</span>
<span style="transform:scaleX(0.9143);position:absolute;left:604px;top:204.98px;font-family:'Liberation Sans', sans-serif;font-size:7.8px;line-height:7.8px;color:#3b3a39;font-weight:400;white-space:nowrap;font-style:normal;transform-origin:0 0;">Абзац</span>
<span style="transform:scaleX(0.8461);position:absolute;left:840px;top:204.98px;font-family:'Liberation Sans', sans-serif;font-size:7.8px;line-height:7.8px;color:#3b3a39;font-weight:400;white-space:nowrap;font-style:normal;transform-origin:0 0;">Малювання</span>
<span style="transform:scaleX(0.8283);position:absolute;left:1001px;top:204.98px;font-family:'Liberation Sans', sans-serif;font-size:7.8px;line-height:7.8px;color:#3b3a39;font-weight:400;white-space:nowrap;font-style:normal;transform-origin:0 0;">Редагування</span>
<span style="transform:scaleX(0.8797);position:absolute;left:1090px;top:204.98px;font-family:'Liberation Sans', sans-serif;font-size:7.8px;line-height:7.8px;color:#3b3a39;font-weight:400;white-space:nowrap;font-style:normal;transform-origin:0 0;">Adobe Acrobat</span>
<div style="position:absolute;left:240.5px;top:160px;width:0.8px;height:51px;background:#c8c6c4;"></div>
<div style="position:absolute;left:326.3px;top:160px;width:0.8px;height:51px;background:#c8c6c4;"></div>
<div style="position:absolute;left:499.4px;top:160px;width:0.8px;height:51px;background:#c8c6c4;"></div>
<div style="position:absolute;left:737.5px;top:160px;width:0.8px;height:51px;background:#c8c6c4;"></div>
<div style="position:absolute;left:987.2px;top:160px;width:0.8px;height:51px;background:#c8c6c4;"></div>
<div style="position:absolute;left:1053.5px;top:160px;width:0.8px;height:51px;background:#c8c6c4;"></div>
<div style="position:absolute;left:1171.5px;top:160px;width:0.8px;height:51px;background:#c8c6c4;"></div>
<svg style="position:absolute;left:233px;top:205px;" width="6" height="6" viewBox="0 0 6 6"><path d="M0.5 0.5 L5.5 0.5 L5.5 5.5 L0.5 5.5 Z M2 2 L5 5 M3 5 L5 5 L5 3" fill="none" stroke="#8a8886" stroke-width="0.6"/></svg>
<svg style="position:absolute;left:493px;top:205px;" width="6" height="6" viewBox="0 0 6 6"><path d="M0.5 0.5 L5.5 0.5 L5.5 5.5 L0.5 5.5 Z M2 2 L5 5 M3 5 L5 5 L5 3" fill="none" stroke="#8a8886" stroke-width="0.6"/></svg>
<svg style="position:absolute;left:732px;top:205px;" width="6" height="6" viewBox="0 0 6 6"><path d="M0.5 0.5 L5.5 0.5 L5.5 5.5 L0.5 5.5 Z M2 2 L5 5 M3 5 L5 5 L5 3" fill="none" stroke="#8a8886" stroke-width="0.6"/></svg>
<svg style="position:absolute;left:981px;top:205px;" width="6" height="6" viewBox="0 0 6 6"><path d="M0.5 0.5 L5.5 0.5 L5.5 5.5 L0.5 5.5 Z M2 2 L5 5 M3 5 L5 5 L5 3" fill="none" stroke="#8a8886" stroke-width="0.6"/></svg>
<svg style="position:absolute;left:1233px;top:206px;" width="8" height="5" viewBox="0 0 8 5"><polyline points="0.5,4.5 4,1 7.5,4.5" fill="none" stroke="#444" stroke-width="1"/></svg>
<svg style="position:absolute;left:133px;top:160px;" width="20" height="20" viewBox="0 0 20 20"><rect x="1.5" y="3" width="11" height="14" rx="1" fill="#fbe6bd" stroke="#e3a22f" stroke-width="1.1"/><rect x="4.5" y="1" width="5" height="3.5" rx="1" fill="#f3f1ef" stroke="#7a7a7a" stroke-width="0.9"/><rect x="8" y="8" width="9.5" height="10.5" fill="#fff" stroke="#6b6b6b" stroke-width="1.1"/></svg>
<span style="transform:scaleX(0.8183);position:absolute;left:127px;top:181.58px;font-family:'Liberation Sans', sans-serif;font-size:8px;line-height:8px;color:#262626;font-weight:400;white-space:nowrap;font-style:normal;transform-origin:0 0;">Вставити</span>
<svg style="position:absolute;left:138px;top:192px;" width="6" height="4" viewBox="0 0 6 4"><polyline points="1.2,1 3,2.7 4.8,1" fill="none" stroke="#555" stroke-width="0.9"/></svg>
<svg style="position:absolute;left:159px;top:160px;" width="10" height="11" viewBox="0 0 10 11"><path d="M2 1 L7 7.5 M8 1 L3 7.5" stroke="#555" stroke-width="0.9"/><circle cx="2.5" cy="9" r="1.6" fill="none" stroke="#2f86d8" stroke-width="1"/><circle cx="7.5" cy="9" r="1.6" fill="none" stroke="#2f86d8" stroke-width="1"/></svg>
<span style="transform:scaleX(0.8409);position:absolute;left:170.5px;top:161.88px;font-family:'Liberation Sans', sans-serif;font-size:8px;line-height:8px;color:#262626;font-weight:400;white-space:nowrap;font-style:normal;transform-origin:0 0;">Вирізати</span>
<svg style="position:absolute;left:158px;top:174px;" width="11" height="11" viewBox="0 0 11 11"><rect x="0.5" y="0.5" width="6" height="8" fill="none" stroke="#555" stroke-width="0.9"/><path d="M3 2.5 L7.5 2.5 L10 5 L10 10.5 L3 10.5 Z" fill="#fff" stroke="#555" stroke-width="0.9"/></svg>
<span style="transform:scaleX(0.8995);position:absolute;left:170px;top:176.28px;font-family:'Liberation Sans', sans-serif;font-size:8px;line-height:8px;color:#262626;font-weight:400;white-space:nowrap;font-style:normal;transform-origin:0 0;">Копіювати</span>
<svg style="position:absolute;left:210px;top:178px;" width="6" height="4" viewBox="0 0 6 4"><polyline points="1.2,1 3,2.7 4.8,1" fill="none" stroke="#555" stroke-width="0.9"/></svg>
<svg style="position:absolute;left:158px;top:189px;" width="11" height="11" viewBox="0 0 11 11"><path d="M1 6 L6 3 L9 7 L4 10 Z" fill="#f2b46a" stroke="#d97b2a" stroke-width="0.8"/><path d="M6 3 L9 1 M8 5 L10.5 3.5" stroke="#555" stroke-width="0.8"/></svg>
<span style="transform:scaleX(0.8702);position:absolute;left:170px;top:190.28px;font-family:'Liberation Sans', sans-serif;font-size:8px;line-height:8px;color:#262626;font-weight:400;white-space:nowrap;font-style:normal;transform-origin:0 0;">Формат за зразком</span>
<svg style="position:absolute;left:250px;top:159px;" width="22" height="19" viewBox="0 0 22 19"><rect x="2.5" y="4" width="18" height="13.5" fill="#fff" stroke="#5f5f5f" stroke-width="1.2"/><path d="M2.5 8.5 L20.5 8.5 M11.5 8.5 L11.5 17.5" stroke="#5f5f5f" stroke-width="1"/><path d="M4.5 0.5 L4.5 8 M0.5 4 L8.5 4" stroke="#3aa34a" stroke-width="1.4"/></svg>
<span style="transform:scaleX(0.8830);position:absolute;left:246px;top:181.58px;font-family:'Liberation Sans', sans-serif;font-size:8px;line-height:8px;color:#262626;font-weight:400;white-space:nowrap;font-style:normal;transform-origin:0 0;">Створити</span>
<span style="transform:scaleX(0.8084);position:absolute;left:250px;top:190.58px;font-family:'Liberation Sans', sans-serif;font-size:8px;line-height:8px;color:#262626;font-weight:400;white-space:nowrap;font-style:normal;transform-origin:0 0;">слайд</span>
<svg style="position:absolute;left:270px;top:193px;" width="6" height="4" viewBox="0 0 6 4"><polyline points="1.2,1 3,2.7 4.8,1" fill="none" stroke="#555" stroke-width="0.9"/></svg>
<svg style="position:absolute;left:279px;top:160px;" width="12" height="10" viewBox="0 0 12 10"><rect x="0.6" y="0.6" width="10.5" height="8.5" fill="none" stroke="#5a5a5a" stroke-width="1.1"/><path d="M0.6 3 L11 3 M5.8 3 L5.8 9" stroke="#5a5a5a" stroke-width="0.9"/></svg>
<span style="transform:scaleX(0.9275);position:absolute;left:292px;top:161.88px;font-family:'Liberation Sans', sans-serif;font-size:8px;line-height:8px;color:#262626;font-weight:400;white-space:nowrap;font-style:normal;transform-origin:0 0;">Макет</span>
<svg style="position:absolute;left:314px;top:164.5px;" width="6" height="4" viewBox="0 0 6 4"><polyline points="1.2,1 3,2.7 4.8,1" fill="none" stroke="#555" stroke-width="0.9"/></svg>
<svg style="position:absolute;left:279px;top:174px;" width="12" height="11" viewBox="0 0 12 11"><rect x="0.6" y="1.6" width="10.5" height="8.5" fill="none" stroke="#5a5a5a" stroke-width="1.1"/><path d="M3.5 0.5 L1.5 2.5 L3.5 4.5 M1.5 2.5 L6 2.5 Q7.5 2.5 7.5 5" fill="none" stroke="#2f86d8" stroke-width="0.9"/></svg>
<span style="transform:scaleX(0.8582);position:absolute;left:292px;top:176.28px;font-family:'Liberation Sans', sans-serif;font-size:8px;line-height:8px;color:#262626;font-weight:400;white-space:nowrap;font-style:normal;transform-origin:0 0;">Скинути</span>
<svg style="position:absolute;left:279px;top:187px;" width="12" height="12" viewBox="0 0 12 12"><rect x="0.6" y="0.5" width="10.5" height="2" fill="#63b06e"/><rect x="0.6" y="3" width="10.5" height="8.5" fill="none" stroke="#5a5a5a" stroke-width="1.1"/><path d="M0.6 5 L11 5" stroke="#5a5a5a" stroke-width="0.9"/></svg>
<span style="transform:scaleX(0.9185);position:absolute;left:292px;top:190.28px;font-family:'Liberation Sans', sans-serif;font-size:8px;line-height:8px;color:#262626;font-weight:400;white-space:nowrap;font-style:normal;transform-origin:0 0;">Розділ</span>
<svg style="position:absolute;left:315px;top:193px;" width="6" height="4" viewBox="0 0 6 4"><polyline points="1.2,1 3,2.7 4.8,1" fill="none" stroke="#555" stroke-width="0.9"/></svg>
<div style="position:absolute;left:331.9px;top:163px;width:88.9px;height:13.7px;background:#e2dfdc;box-shadow:inset 0 0 0 0.6px #cfccc9;"></div>
<svg style="position:absolute;left:411px;top:168px;" width="6" height="4" viewBox="0 0 6 4"><polyline points="1.2,1 3,2.7 4.8,1" fill="none" stroke="#a6a4a2" stroke-width="0.9"/></svg>
<div style="position:absolute;left:422px;top:163px;width:26.7px;height:13.7px;background:#e2dfdc;box-shadow:inset 0 0 0 0.6px #cfccc9;"></div>
<span style="transform:scaleX(0.7556);position:absolute;left:424px;top:166.18px;font-family:'Liberation Sans', sans-serif;font-size:7.8px;line-height:7.8px;color:#a19f9d;font-weight:400;white-space:nowrap;font-style:normal;transform-origin:0 0;">12+</span>
<svg style="position:absolute;left:440px;top:168px;" width="6" height="4" viewBox="0 0 6 4"><polyline points="1.2,1 3,2.7 4.8,1" fill="none" stroke="#a6a4a2" stroke-width="0.9"/></svg>
<span style="transform:scaleX(1.1991);position:absolute;left:452px;top:165.10px;font-family:'Liberation Sans', sans-serif;font-size:10px;line-height:10px;color:#a19f9d;font-weight:400;white-space:nowrap;font-style:normal;transform-origin:0 0;">A</span>
<span style="transform:scaleX(0.8477);position:absolute;left:460px;top:163.55px;font-family:'Liberation Sans', sans-serif;font-size:5px;line-height:5px;color:#a19f9d;font-weight:400;white-space:nowrap;font-style:normal;transform-origin:0 0;">^</span>
<span style="transform:scaleX(1.2342);position:absolute;left:467px;top:166.34px;font-family:'Liberation Sans', sans-serif;font-size:8.5px;line-height:8.5px;color:#a19f9d;font-weight:400;white-space:nowrap;font-style:normal;transform-origin:0 0;">A</span>
<span style="transform:scaleX(1.1963);position:absolute;left:474px;top:163.55px;font-family:'Liberation Sans', sans-serif;font-size:5px;line-height:5px;color:#a19f9d;font-weight:400;white-space:nowrap;font-style:normal;transform-origin:0 0;">ˇ</span>
<div style="position:absolute;left:479px;top:164px;width:0.6px;height:12px;background:#d0cecc;"></div>
<span style="transform:scaleX(1.0492);position:absolute;left:483px;top:165.10px;font-family:'Liberation Sans', sans-serif;font-size:10px;line-height:10px;color:#a19f9d;font-weight:400;white-space:nowrap;font-style:italic;transform-origin:0 0;">A</span>
<svg style="position:absolute;left:488px;top:167px;" width="7" height="6" viewBox="0 0 7 6"><path d="M0.5 5 L3 1 L6 3 L3.5 5.5 Z" fill="none" stroke="#a19f9d" stroke-width="0.8"/></svg>
<span style="transform:scaleX(0.8455);position:absolute;left:333px;top:184.24px;font-family:'Liberation Sans', sans-serif;font-size:8.5px;line-height:8.5px;color:#7a7876;font-weight:700;white-space:nowrap;font-style:normal;transform-origin:0 0;">Ж</span>
<span style="transform:scaleX(0.8972);position:absolute;left:349px;top:184.24px;font-family:'Liberation Sans', sans-serif;font-size:8.5px;line-height:8.5px;color:#a19f9d;font-weight:400;white-space:nowrap;font-style:italic;transform-origin:0 0;">К</span>
<span style="transform:scaleX(0.7366);position:absolute;left:363px;top:184.24px;font-family:'Liberation Sans', sans-serif;font-size:8.5px;line-height:8.5px;color:#a19f9d;font-weight:400;white-space:nowrap;font-style:normal;transform-origin:0 0;">П</span>
<span style="transform:scaleX(0.7052);position:absolute;left:377px;top:184.24px;font-family:'Liberation Sans', sans-serif;font-size:8.5px;line-height:8.5px;color:#8a8886;font-weight:400;white-space:nowrap;font-style:normal;transform-origin:0 0;">S</span>
<span style="transform:scaleX(0.8584);position:absolute;left:390px;top:185.22px;font-family:'Liberation Sans', sans-serif;font-size:6.5px;line-height:6.5px;color:#a19f9d;font-weight:400;white-space:nowrap;font-style:normal;transform-origin:0 0;text-decoration:line-through;">abc</span>
<span style="transform:scaleX(0.9062);position:absolute;left:403px;top:183.07px;font-family:'Liberation Sans', sans-serif;font-size:7px;line-height:7px;color:#a19f9d;font-weight:400;white-space:nowrap;font-style:normal;transform-origin:0 0;">AV</span>
<svg style="position:absolute;left:403px;top:190px;" width="9" height="4" viewBox="0 0 9 4"><path d="M0.5 2 L8.5 2 M0.5 2 L2 0.8 M0.5 2 L2 3.2 M8.5 2 L7 0.8 M8.5 2 L7 3.2" stroke="#a19f9d" stroke-width="0.6" fill="none"/></svg>
<svg style="position:absolute;left:415px;top:187px;" width="6" height="4" viewBox="0 0 6 4"><polyline points="1.2,1 3,2.7 4.8,1" fill="none" stroke="#a6a4a2" stroke-width="0.9"/></svg>
<span style="transform:scaleX(0.9610);position:absolute;left:425px;top:184.24px;font-family:'Liberation Sans', sans-serif;font-size:8.5px;line-height:8.5px;color:#a19f9d;font-weight:400;white-space:nowrap;font-style:normal;transform-origin:0 0;">Aa</span>
<svg style="position:absolute;left:438px;top:187px;" width="6" height="4" viewBox="0 0 6 4"><polyline points="1.2,1 3,2.7 4.8,1" fill="none" stroke="#a6a4a2" stroke-width="0.9"/></svg>
<div style="position:absolute;left:447px;top:183px;width:0.6px;height:12px;background:#d0cecc;"></div>
<svg style="position:absolute;left:452px;top:181px;" width="11" height="13" viewBox="0 0 11 13"><path d="M2 9 L7.5 2.5 L9.5 4.5 L4 10.5 Z" fill="none" stroke="#9e9c9a" stroke-width="0.9"/><rect x="0" y="11" width="11" height="2" fill="#a9a7a5"/></svg>
<svg style="position:absolute;left:465px;top:187px;" width="6" height="4" viewBox="0 0 6 4"><polyline points="1.2,1 3,2.7 4.8,1" fill="none" stroke="#a6a4a2" stroke-width="0.9"/></svg>
<span style="transform:scaleX(1.2468);position:absolute;left:476.5px;top:183.09px;font-family:'Liberation Sans', sans-serif;font-size:9px;line-height:9px;color:#a19f9d;font-weight:400;white-space:nowrap;font-style:normal;transform-origin:0 0;">A</span>
<div style="position:absolute;left:475px;top:192.5px;width:11px;height:2px;background:#a9a7a5;"></div>
<svg style="position:absolute;left:488px;top:187px;" width="6" height="4" viewBox="0 0 6 4"><polyline points="1.2,1 3,2.7 4.8,1" fill="none" stroke="#a6a4a2" stroke-width="0.9"/></svg>
<svg style="position:absolute;left:506px;top:165px;" width="10" height="11" viewBox="0 0 10 11"><rect x="0" y="0.19999999999999996" width="1.6" height="1.6" fill="#a19f9d"/><rect x="3" y="0.6" width="7" height="0.9" fill="#a19f9d"/><rect x="0" y="3.4000000000000004" width="1.6" height="1.6" fill="#a19f9d"/><rect x="3" y="3.8000000000000003" width="7" height="0.9" fill="#a19f9d"/><rect x="0" y="6.6000000000000005" width="1.6" height="1.6" fill="#a19f9d"/><rect x="3" y="7.0" width="7" height="0.9" fill="#a19f9d"/></svg>
<svg style="position:absolute;left:520px;top:168px;" width="6" height="4" viewBox="0 0 6 4"><polyline points="1.2,1 3,2.7 4.8,1" fill="none" stroke="#a6a4a2" stroke-width="0.9"/></svg>
<svg style="position:absolute;left:529px;top:165px;" width="10" height="11" viewBox="0 0 10 11"><rect x="0" y="0.19999999999999996" width="1.4" height="1.8" fill="#a19f9d"/><rect x="3" y="0.6" width="7" height="0.9" fill="#a19f9d"/><rect x="0" y="3.4000000000000004" width="1.4" height="1.8" fill="#a19f9d"/><rect x="3" y="3.8000000000000003" width="7" height="0.9" fill="#a19f9d"/><rect x="0" y="6.6000000000000005" width="1.4" height="1.8" fill="#a19f9d"/><rect x="3" y="7.0" width="7" height="0.9" fill="#a19f9d"/></svg>
<svg style="position:absolute;left:543px;top:168px;" width="6" height="4" viewBox="0 0 6 4"><polyline points="1.2,1 3,2.7 4.8,1" fill="none" stroke="#a6a4a2" stroke-width="0.9"/></svg>
<div style="position:absolute;left:551px;top:164px;width:0.6px;height:12px;background:#d0cecc;"></div>
<svg style="position:absolute;left:556px;top:165px;" width="10" height="11" viewBox="0 0 10 11"><rect x="0" y="0.6" width="8" height="0.9" fill="#a19f9d"/><rect x="0" y="3.8000000000000003" width="8" height="0.9" fill="#a19f9d"/><rect x="0" y="7.0" width="8" height="0.9" fill="#a19f9d"/><rect x="0" y="10.200000000000001" width="8" height="0.9" fill="#a19f9d"/></svg>
<svg style="position:absolute;left:570px;top:165px;" width="10" height="11" viewBox="0 0 10 11"><rect x="0" y="0.6" width="8" height="0.9" fill="#a19f9d"/><rect x="0" y="3.8000000000000003" width="8" height="0.9" fill="#a19f9d"/><rect x="0" y="7.0" width="8" height="0.9" fill="#a19f9d"/><rect x="0" y="10.200000000000001" width="8" height="0.9" fill="#a19f9d"/></svg>
<div style="position:absolute;left:584px;top:164px;width:0.6px;height:12px;background:#d0cecc;"></div>
<svg style="position:absolute;left:590px;top:165px;" width="10" height="11" viewBox="0 0 10 11"><rect x="0" y="0.6" width="8" height="0.9" fill="#a19f9d"/><rect x="0" y="3.8000000000000003" width="8" height="0.9" fill="#a19f9d"/><rect x="0" y="7.0" width="8" height="0.9" fill="#a19f9d"/><rect x="0" y="10.200000000000001" width="8" height="0.9" fill="#a19f9d"/></svg>
<svg style="position:absolute;left:587px;top:163px;" width="3" height="13" viewBox="0 0 3 13"><path d="M1.5 0.5 L1.5 12.5 M0.3 2 L1.5 0.5 L2.7 2 M0.3 11 L1.5 12.5 L2.7 11" stroke="#a19f9d" stroke-width="0.7" fill="none"/></svg>
<svg style="position:absolute;left:601px;top:168px;" width="6" height="4" viewBox="0 0 6 4"><polyline points="1.2,1 3,2.7 4.8,1" fill="none" stroke="#a6a4a2" stroke-width="0.9"/></svg>
<svg style="position:absolute;left:507px;top:184px;" width="10" height="11" viewBox="0 0 10 11"><rect x="0" y="0.6" width="8" height="0.9" fill="#a19f9d"/><rect x="0" y="3.8000000000000003" width="6" height="0.9" fill="#a19f9d"/><rect x="0" y="7.0" width="8" height="0.9" fill="#a19f9d"/><rect x="0" y="10.200000000000001" width="6" height="0.9" fill="#a19f9d"/></svg>
<svg style="position:absolute;left:521px;top:184px;" width="10" height="11" viewBox="0 0 10 11"><rect x="0.0" y="0.6" width="8" height="0.9" fill="#a19f9d"/><rect x="1.0" y="3.8000000000000003" width="6" height="0.9" fill="#a19f9d"/><rect x="0.0" y="7.0" width="8" height="0.9" fill="#a19f9d"/><rect x="1.0" y="10.200000000000001" width="6" height="0.9" fill="#a19f9d"/></svg>
<svg style="position:absolute;left:535px;top:184px;" width="10" height="11" viewBox="0 0 10 11"><rect x="0" y="0.6" width="8" height="0.9" fill="#a19f9d"/><rect x="2" y="3.8000000000000003" width="6" height="0.9" fill="#a19f9d"/><rect x="0" y="7.0" width="8" height="0.9" fill="#a19f9d"/><rect x="2" y="10.200000000000001" width="6" height="0.9" fill="#a19f9d"/></svg>
<svg style="position:absolute;left:549px;top:184px;" width="10" height="11" viewBox="0 0 10 11"><rect x="0" y="0.6" width="8" height="0.9" fill="#a19f9d"/><rect x="0" y="3.8000000000000003" width="8" height="0.9" fill="#a19f9d"/><rect x="0" y="7.0" width="8" height="0.9" fill="#a19f9d"/><rect x="0" y="10.200000000000001" width="8" height="0.9" fill="#a19f9d"/></svg>
<div style="position:absolute;left:563px;top:183px;width:0.6px;height:12px;background:#d0cecc;"></div>
<svg style="position:absolute;left:567px;top:185px;" width="9" height="7" viewBox="0 0 9 7"><rect x="0" y="1" width="3.5" height="0.9" fill="#a19f9d"/><rect x="5" y="1" width="3.5" height="0.9" fill="#a19f9d"/><rect x="0" y="4" width="3.5" height="0.9" fill="#a19f9d"/><rect x="5" y="4" width="3.5" height="0.9" fill="#a19f9d"/></svg>
<svg style="position:absolute;left:578px;top:187px;" width="6" height="4" viewBox="0 0 6 4"><polyline points="1.2,1 3,2.7 4.8,1" fill="none" stroke="#a6a4a2" stroke-width="0.9"/></svg>
<svg style="position:absolute;left:608px;top:159px;" width="9" height="13" viewBox="0 0 9 13"><path d="M2 0.5 L2 11 M0.5 9.5 L2 11 L3.5 9.5 M6.5 0.5 L6.5 11 M5 9.5 L6.5 11 L8 9.5" fill="none" stroke="#a19f9d" stroke-width="0.8"/><rect x="3" y="2" width="2.5" height="5" fill="none" stroke="#a19f9d" stroke-width="0.6"/></svg>
<span style="transform:scaleX(0.8989);position:absolute;left:620px;top:162.28px;font-family:'Liberation Sans', sans-serif;font-size:8px;line-height:8px;color:#a19f9d;font-weight:400;white-space:nowrap;font-style:normal;transform-origin:0 0;">Напрямок тексту</span>
<svg style="position:absolute;left:678px;top:165px;" width="6" height="4" viewBox="0 0 6 4"><polyline points="1.2,1 3,2.7 4.8,1" fill="none" stroke="#a6a4a2" stroke-width="0.9"/></svg>
<svg style="position:absolute;left:608px;top:174px;" width="9" height="11" viewBox="0 0 9 11"><rect x="0.5" y="1" width="8" height="9" fill="none" stroke="#a19f9d" stroke-width="0.7" stroke-dasharray="1.5 1"/><path d="M4.5 2.5 L4.5 8.5 M3 4 L4.5 2.5 L6 4 M3 7 L4.5 8.5 L6 7" fill="none" stroke="#a19f9d" stroke-width="0.7"/></svg>
<span style="transform:scaleX(0.8692);position:absolute;left:620px;top:176.48px;font-family:'Liberation Sans', sans-serif;font-size:8px;line-height:8px;color:#a19f9d;font-weight:400;white-space:nowrap;font-style:normal;transform-origin:0 0;">Вирівняти текст</span>
<svg style="position:absolute;left:673px;top:179px;" width="6" height="4" viewBox="0 0 6 4"><polyline points="1.2,1 3,2.7 4.8,1" fill="none" stroke="#a6a4a2" stroke-width="0.9"/></svg>
<svg style="position:absolute;left:608px;top:188px;" width="10" height="10" viewBox="0 0 10 10"><path d="M0.5 1 L4 1 M0.5 3.5 L3 3.5" stroke="#a19f9d" stroke-width="0.7"/><rect x="3" y="4" width="6.5" height="5.5" fill="none" stroke="#a19f9d" stroke-width="0.8"/><rect x="5" y="5.5" width="3" height="2.5" fill="#a19f9d"/></svg>
<span style="transform:scaleX(0.9114);position:absolute;left:620px;top:190.48px;font-family:'Liberation Sans', sans-serif;font-size:8px;line-height:8px;color:#a19f9d;font-weight:400;white-space:nowrap;font-style:normal;transform-origin:0 0;">Перетворити на об&#700;єкт SmartArt</span>
<svg style="position:absolute;left:728px;top:193px;" width="6" height="4" viewBox="0 0 6 4"><polyline points="1.2,1 3,2.7 4.8,1" fill="none" stroke="#a6a4a2" stroke-width="0.9"/></svg>
<div style="position:absolute;left:743.6px;top:160.3px;width:79px;height:35.5px;background:#fff;box-shadow:inset 0 0 0 0.7px #d2d0ce;"></div>
<div style="position:absolute;left:816px;top:160.3px;width:0.6px;height:35.5px;background:#d2d0ce;"></div>
<div style="position:absolute;left:816px;top:172px;width:7.5px;height:0.6px;background:#d2d0ce;"></div>
<div style="position:absolute;left:816px;top:184px;width:7.5px;height:0.6px;background:#d2d0ce;"></div>
<svg style="position:absolute;left:817px;top:164px;" width="6" height="4" viewBox="0 0 6 4"><polyline points="1.2,3 3,1.3 4.8,3" fill="none" stroke="#bbb" stroke-width="0.8"/></svg>
<svg style="position:absolute;left:817px;top:176px;" width="6" height="4" viewBox="0 0 6 4"><polyline points="1.2,1 3,2.7 4.8,1" fill="none" stroke="#444" stroke-width="0.9"/></svg>
<svg style="position:absolute;left:817px;top:187px;" width="6" height="6" viewBox="0 0 6 6"><path d="M0.5 0.8 L5.5 0.8 M0.5 2.5 L3 5 L5.5 2.5" fill="none" stroke="#444" stroke-width="0.9"/></svg>
<svg style="position:absolute;left:745px;top:161px;" width="70" height="34" viewBox="0 0 70 34"><rect x="1" y="2" width="9" height="7" fill="none" stroke="#555" stroke-width="0.8" stroke="#2f86d8"/><text x="3.3" y="8" font-size="6" fill="#2f86d8" font-family="Liberation Sans">A</text><line x1="13" y1="2" x2="21" y2="9" fill="none" stroke="#555" stroke-width="0.8"/><line x1="24" y1="2" x2="32" y2="9" fill="none" stroke="#555" stroke-width="0.8"/><rect x="35" y="2.5" width="9" height="6.5" fill="none" stroke="#555" stroke-width="0.8"/><ellipse cx="50.5" cy="5.7" rx="4.8" ry="3.3" fill="none" stroke="#555" stroke-width="0.8"/><rect x="57.5" y="2.5" width="10" height="6.5" rx="2" fill="none" stroke="#555" stroke-width="0.8"/><path d="M1 20 L5.5 12 L10 20 Z" fill="none" stroke="#555" stroke-width="0.8"/><path d="M13 13 L17 13 L17 20 L21 20" fill="none" stroke="#555" stroke-width="0.8"/><path d="M24 13 L28 13 L28 20 L32 20" fill="none" stroke="#555" stroke-width="0.8"/><path d="M35 14.5 L40 14.5 L40 12.5 L44 16.5 L40 20.5 L40 18.5 L35 18.5 Z" fill="none" stroke="#555" stroke-width="0.8"/><path d="M48.5 12 L52.5 12 L52.5 16 L54.5 16 L50.5 20.5 L46.5 16 L48.5 16 Z" fill="none" stroke="#555" stroke-width="0.8"/><path d="M57.5 13 Q60 11.5 64 12.5 L67.5 16 L67.5 20.5 L57.5 20.5 Z" fill="none" stroke="#555" stroke-width="0.8"/><path d="M2 25 Q6 22 7 26 Q3 30 9 31" fill="none" stroke="#555" stroke-width="0.8"/><path d="M13 24 Q19 24 21 31" fill="none" stroke="#555" stroke-width="0.8"/><path d="M24 31 Q26 23 28 25 Q30 29 32 31" fill="none" stroke="#555" stroke-width="0.8"/><path d="M38 23 Q36 23 36 26 Q36 27.5 35 27.5 Q36 27.5 36 29 Q36 32 38 32" fill="none" stroke="#555" stroke-width="0.8"/><path d="M47 23 Q49 23 49 26 Q49 27.5 50 27.5 Q49 27.5 49 29 Q49 32 47 32" fill="none" stroke="#555" stroke-width="0.8"/><path d="M62 23 L63.5 26.5 L67 26.8 L64.3 29 L65.2 32.3 L62 30.5 L58.8 32.3 L59.7 29 L57 26.8 L60.5 26.5 Z" fill="none" stroke="#555" stroke-width="0.8"/></svg>
<svg style="position:absolute;left:840px;top:160px;" width="19" height="19" viewBox="0 0 19 19"><rect x="5" y="5" width="9" height="9" fill="#f7c66b" stroke="#e29c2b" stroke-width="0.8"/><rect x="0.6" y="0.6" width="8" height="8" fill="#fff" stroke="#555" stroke-width="1"/><rect x="10" y="10" width="8" height="8" fill="#fff" stroke="#555" stroke-width="1"/></svg>
<span style="transform:scaleX(0.7932);position:absolute;left:827px;top:181.48px;font-family:'Liberation Sans', sans-serif;font-size:8px;line-height:8px;color:#262626;font-weight:700;white-space:nowrap;font-style:normal;transform-origin:0 0;">Упорядкувати</span>
<svg style="position:absolute;left:846px;top:192px;" width="6" height="4" viewBox="0 0 6 4"><polyline points="1.2,1 3,2.7 4.8,1" fill="none" stroke="#555" stroke-width="0.9"/></svg>
<svg style="position:absolute;left:879px;top:160px;" width="20" height="20" viewBox="0 0 20 20"><rect x="1" y="1" width="16" height="16" fill="#ecebea" stroke="#b5b3b1" stroke-width="0.9"/><path d="M6 18 L17 7 L19 9 L8 19 Z" fill="none" stroke="#b5b3b1" stroke-width="0.9"/></svg>
<span style="transform:scaleX(0.8529);position:absolute;left:875px;top:181.48px;font-family:'Liberation Sans', sans-serif;font-size:8px;line-height:8px;color:#b5b3b1;font-weight:400;white-space:nowrap;font-style:normal;transform-origin:0 0;">Експрес-</span>
<span style="transform:scaleX(0.7536);position:absolute;left:879px;top:190.48px;font-family:'Liberation Sans', sans-serif;font-size:8px;line-height:8px;color:#b5b3b1;font-weight:400;white-space:nowrap;font-style:normal;transform-origin:0 0;">стилі</span>
<svg style="position:absolute;left:894px;top:193px;" width="6" height="4" viewBox="0 0 6 4"><polyline points="1.2,1 3,2.7 4.8,1" fill="none" stroke="#bbb" stroke-width="0.9"/></svg>
<svg style="position:absolute;left:905px;top:160px;" width="12" height="12" viewBox="0 0 12 12"><path d="M3 6 L6.5 2 L10 6 L6.5 9.5 Z" fill="none" stroke="#b5b3b1" stroke-width="0.8"/><rect x="0.5" y="10" width="11" height="1.5" fill="#b5b3b1"/></svg>
<span style="transform:scaleX(0.9278);position:absolute;left:918px;top:161.68px;font-family:'Liberation Sans', sans-serif;font-size:8px;line-height:8px;color:#b5b3b1;font-weight:400;white-space:nowrap;font-style:normal;transform-origin:0 0;">Заливка фігури</span>
<svg style="position:absolute;left:972px;top:164px;" width="6" height="4" viewBox="0 0 6 4"><polyline points="1.2,1 3,2.7 4.8,1" fill="none" stroke="#bbb" stroke-width="0.9"/></svg>
<svg style="position:absolute;left:905px;top:173px;" width="12" height="12" viewBox="0 0 12 12"><rect x="1" y="1" width="8" height="7" fill="none" stroke="#b5b3b1" stroke-width="0.8"/><path d="M4 8 L10 2" stroke="#b5b3b1" stroke-width="1"/><rect x="0.5" y="10" width="11" height="1.5" fill="#b5b3b1"/></svg>
<span style="transform:scaleX(0.9429);position:absolute;left:918px;top:175.48px;font-family:'Liberation Sans', sans-serif;font-size:8px;line-height:8px;color:#b5b3b1;font-weight:400;white-space:nowrap;font-style:normal;transform-origin:0 0;">Контур фігури</span>
<svg style="position:absolute;left:968px;top:178px;" width="6" height="4" viewBox="0 0 6 4"><polyline points="1.2,1 3,2.7 4.8,1" fill="none" stroke="#bbb" stroke-width="0.9"/></svg>
<svg style="position:absolute;left:905px;top:187px;" width="12" height="10" viewBox="0 0 12 10"><path d="M1 5 L6 1 L11 5 L6 9 Z" fill="none" stroke="#b5b3b1" stroke-width="0.8"/><path d="M2 7 L6 9.5 L10 7" fill="none" stroke="#b5b3b1" stroke-width="0.8"/></svg>
<span style="transform:scaleX(0.8353);position:absolute;left:918px;top:188.68px;font-family:'Liberation Sans', sans-serif;font-size:8px;line-height:8px;color:#b5b3b1;font-weight:400;white-space:nowrap;font-style:normal;transform-origin:0 0;">Ефекти для фігур</span>
<svg style="position:absolute;left:974px;top:191px;" width="6" height="4" viewBox="0 0 6 4"><polyline points="1.2,1 3,2.7 4.8,1" fill="none" stroke="#bbb" stroke-width="0.9"/></svg>
<svg style="position:absolute;left:994px;top:160px;" width="11" height="11" viewBox="0 0 11 11"><circle cx="6.5" cy="4.3" r="3.5" fill="none" stroke="#555" stroke-width="0.9"/><line x1="1" y1="10" x2="4" y2="7" stroke="#555" stroke-width="1"/></svg>
<span style="transform:scaleX(0.8551);position:absolute;left:1005.5px;top:161.68px;font-family:'Liberation Sans', sans-serif;font-size:8px;line-height:8px;color:#262626;font-weight:400;white-space:nowrap;font-style:normal;transform-origin:0 0;">Знайти</span>
<svg style="position:absolute;left:993px;top:172px;" width="12" height="13" viewBox="0 0 12 13"><text x="5" y="5.5" font-size="6" fill="#b146c2" font-family="Liberation Sans">b</text><text x="6" y="12.5" font-size="6" fill="#2f86d8" font-family="Liberation Sans">c</text><path d="M3 4 Q1 8 4 10 M2.5 8.5 L4 10 L5.5 9" fill="none" stroke="#2f86d8" stroke-width="0.8"/></svg>
<span style="transform:scaleX(0.8934);position:absolute;left:1005px;top:175.48px;font-family:'Liberation Sans', sans-serif;font-size:8px;line-height:8px;color:#262626;font-weight:400;white-space:nowrap;font-style:normal;transform-origin:0 0;">Замінити</span>
<svg style="position:absolute;left:1040px;top:178px;" width="6" height="4" viewBox="0 0 6 4"><polyline points="1.2,1 3,2.7 4.8,1" fill="none" stroke="#555" stroke-width="0.9"/></svg>
<svg style="position:absolute;left:994px;top:186px;" width="8" height="11" viewBox="0 0 8 11"><path d="M1 0.8 L1 9 L3 7 L5 10 L6.2 9.4 L4.5 6.5 L7 6.2 Z" fill="none" stroke="#555" stroke-width="0.8"/></svg>
<span style="transform:scaleX(0.8350);position:absolute;left:1006px;top:188.68px;font-family:'Liberation Sans', sans-serif;font-size:8px;line-height:8px;color:#262626;font-weight:400;white-space:nowrap;font-style:normal;transform-origin:0 0;">Виділити</span>
<svg style="position:absolute;left:1036px;top:191px;" width="6" height="4" viewBox="0 0 6 4"><polyline points="1.2,1 3,2.7 4.8,1" fill="none" stroke="#555" stroke-width="0.9"/></svg>
<svg style="position:absolute;left:1106px;top:162px;" width="15" height="16" viewBox="0 0 15 16"><path d="M1 1 L7.5 1 L11 4.5 L11 8" fill="none" stroke="#1473e6" stroke-width="1.4"/><path d="M7.5 1 L7.5 4.5 L11 4.5" fill="none" stroke="#1473e6" stroke-width="1.2"/><path d="M1 1 L1 12.5 L5 12.5" fill="none" stroke="#1473e6" stroke-width="1.4"/><rect x="6" y="9" width="8" height="6" rx="1" fill="none" stroke="#1473e6" stroke-width="1.3"/><path d="M10 13 L10 7.5 M8.3 9 L10 7.2 L11.7 9" fill="none" stroke="#1473e6" stroke-width="1.1"/></svg>
<span style="transform:scaleX(0.8470);position:absolute;left:1068px;top:181.68px;font-family:'Liberation Sans', sans-serif;font-size:8px;line-height:8px;color:#262626;font-weight:400;white-space:nowrap;font-style:normal;transform-origin:0 0;">Створити файл Adobe PDF і</span>
<span style="transform:scaleX(0.8711);position:absolute;left:1059px;top:190.68px;font-family:'Liberation Sans', sans-serif;font-size:8px;line-height:8px;color:#262626;font-weight:400;white-space:nowrap;font-style:normal;transform-origin:0 0;">надати до нього спільний доступ</span>
<div style="position:absolute;left:121px;top:213px;width:1124px;height:462px;background:#e6e6e6;"></div>
<div style="position:absolute;left:287px;top:213.5px;width:8.5px;height:461.5px;background:#dcdcdc;"></div>
<div style="position:absolute;left:287px;top:214px;width:8.5px;height:10.5px;background:#fff;box-shadow:inset 0 0 0 0.6px #c8c8c8;"></div>
<svg style="position:absolute;left:288.5px;top:217px;" width="6" height="4" viewBox="0 0 6 4"><polygon points="0.5,3.5 3,0.8 5.5,3.5" fill="#555"/></svg>
<div style="position:absolute;left:287.3px;top:225px;width:8px;height:339px;background:#fff;"></div>
<div style="position:absolute;left:297px;top:213.5px;width:2px;height:461.5px;background:#d5d5d5;"></div>
<div style="position:absolute;left:1236px;top:213.5px;width:9px;height:461.5px;background:#e9e9e9;"></div>
<div style="position:absolute;left:1236px;top:214px;width:8.5px;height:10.5px;background:#fff;box-shadow:inset 0 0 0 0.6px #c8c8c8;"></div>
<svg style="position:absolute;left:1237.5px;top:217px;" width="6" height="4" viewBox="0 0 6 4"><polygon points="0.5,3.5 3,0.8 5.5,3.5" fill="#555"/></svg>
<div style="position:absolute;left:1236.3px;top:317.5px;width:8px;height:44px;background:#fff;"></div>
<div style="position:absolute;left:1236px;top:645.5px;width:8.5px;height:8px;background:#fff;box-shadow:inset 0 0 0 0.6px #c8c8c8;"></div>
<svg style="position:absolute;left:1237.5px;top:648px;" width="6" height="4" viewBox="0 0 6 4"><polygon points="0.5,0.5 3,3.2 5.5,0.5" fill="#555"/></svg>
<svg style="position:absolute;left:1237px;top:656px;" width="7" height="8" viewBox="0 0 7 8"><path d="M1 3.5 L3.5 1 L6 3.5 M1 6.5 L3.5 4 L6 6.5 M1 7.5 L6 7.5" fill="none" stroke="#777" stroke-width="0.8"/></svg>
<svg style="position:absolute;left:1237px;top:664px;" width="7" height="8" viewBox="0 0 7 8"><path d="M1 0.8 L6 0.8 M1 1.8 L3.5 4.3 L6 1.8 M1 4.8 L3.5 7.3 L6 4.8" fill="none" stroke="#777" stroke-width="0.8"/></svg>
<span style="transform:scaleX(0.9708);position:absolute;left:127.3px;top:222.40px;font-family:'Liberation Sans', sans-serif;font-size:10px;line-height:10px;color:#404040;font-weight:400;white-space:nowrap;font-style:normal;transform-origin:0 0;">1</span>
<span style="transform:scaleX(0.9708);position:absolute;left:127.3px;top:309.40px;font-family:'Liberation Sans', sans-serif;font-size:10px;line-height:10px;color:#404040;font-weight:400;white-space:nowrap;font-style:normal;transform-origin:0 0;">2</span>
<span style="transform:scaleX(0.9708);position:absolute;left:127.3px;top:482.50px;font-family:'Liberation Sans', sans-serif;font-size:10px;line-height:10px;color:#404040;font-weight:400;white-space:nowrap;font-style:normal;transform-origin:0 0;">4</span>
<span style="transform:scaleX(0.9708);position:absolute;left:127.3px;top:569.30px;font-family:'Liberation Sans', sans-serif;font-size:10px;line-height:10px;color:#404040;font-weight:400;white-space:nowrap;font-style:normal;transform-origin:0 0;">5</span>
<span style="transform:scaleX(0.9708);position:absolute;left:127.3px;top:655.90px;font-family:'Liberation Sans', sans-serif;font-size:10px;line-height:10px;color:#404040;font-weight:400;white-space:nowrap;font-style:normal;transform-origin:0 0;">6</span>
<span style="transform:scaleX(0.9708);position:absolute;left:127.3px;top:396.30px;font-family:'Liberation Sans', sans-serif;font-size:10px;line-height:10px;color:#c43e1c;font-weight:400;white-space:nowrap;font-style:normal;transform-origin:0 0;">3</span>
<div style="position:absolute;left:365.5px;top:220.5px;width:804px;height:452.5px;background:#fff;box-shadow:0 0 0 0.7px #d0d0d0;"></div>
<div style="position:absolute;left:388px;top:240.5px;width:728px;height:42px;border-radius:6px;background:#b3c4e6;box-shadow:-10px 9px 9px rgba(80,80,80,0.45);"></div>
<div style="position:absolute;left:388px;top:240.5px;width:728px;height:42px;border-radius:6px;background:linear-gradient(180deg,#b9c9ea 0%,#b1c3e6 60%,#acbfe4 100%);box-shadow:inset -2px 0 1px rgba(255,255,255,0.6), inset 2px 0 1px rgba(255,255,255,0.5);"></div>
<span style="transform:scaleX(0.9965);position:absolute;left:409.8px;top:246.62px;font-family:'Liberation Sans', sans-serif;font-size:17.5px;line-height:17.5px;color:#0d0d0d;font-weight:700;white-space:nowrap;font-style:normal;transform-origin:0 0;">Статистика за результатами третього року експерименту впровадження ДФЗО</span>
<span style="transform:scaleX(1.0422);position:absolute;left:646px;top:270.00px;font-family:'Liberation Sans', sans-serif;font-size:10px;line-height:10px;color:#0d0d0d;font-weight:700;white-space:nowrap;font-style:normal;transform-origin:0 0;">(за даними, поданими закладами освіти)</span>
<svg style="position:absolute;left:1125px;top:224px;" width="44" height="27" viewBox="0 0 44 27"><path d="M22 1.6 C33 1.4 41.5 6 41.5 12.5 C41.5 19.5 33 24.6 22 24.6 C11 24.6 1.8 19.5 1.8 13 C1.8 6.5 11 1.8 22 1.6 Z" fill="none" stroke="#b5121b" stroke-width="0.8"/><path d="M16 2.3 C7 3.5 1.5 8 1.6 13 C1.7 19 8 23.5 17 24.5 C10 22.5 5 18.5 5 13.2 C5 8.5 9 4.5 16 2.3 Z" fill="#b5121b"/><text x="9.3" y="12.8" font-family="Liberation Serif" font-weight="700" font-size="6.8" fill="#b5121b">Н</text><text x="15.3" y="15" font-family="Liberation Serif" font-weight="700" font-size="6.8" fill="#b5121b">М</text><text x="22.6" y="17.4" font-family="Liberation Serif" font-weight="700" font-size="6.8" fill="#b5121b">Ц</text><rect x="29" y="10.3" width="8.8" height="9.6" fill="#b5121b"/><path d="M30.3 13.8 Q33.3 11.5 36.5 13.2 M30.3 16.2 Q33.3 18.8 36.5 16.2" stroke="#fff" stroke-width="1" fill="none"/></svg>
<div style="position:absolute;left:395.5px;top:303.5px;width:753.5px;height:351.5px;background:#d7e4bc;"></div>
<svg style="position:absolute;left:366px;top:221px;" width="804" height="452" viewBox="0 0 804 452"><g stroke="#24241f" stroke-width="1.15" stroke-linecap="square"><line x1="29.50" y1="82.50" x2="783.20" y2="82.50"/><line x1="130.00" y1="185.30" x2="783.20" y2="185.30"/><line x1="29.50" y1="232.90" x2="783.20" y2="232.90"/><line x1="29.50" y1="256.50" x2="783.20" y2="256.50"/><line x1="29.50" y1="292.30" x2="783.20" y2="292.30"/><line x1="29.50" y1="328.50" x2="783.20" y2="328.50"/><line x1="29.50" y1="360.30" x2="783.20" y2="360.30"/><line x1="29.50" y1="410.30" x2="783.20" y2="410.30"/><line x1="29.50" y1="434.00" x2="783.20" y2="434.00"/><line x1="29.50" y1="82.00" x2="29.50" y2="434.50"/><line x1="783.20" y1="82.00" x2="783.20" y2="434.50"/><line x1="130.00" y1="82.50" x2="130.00" y2="232.90"/><line x1="130.00" y1="256.50" x2="130.00" y2="292.30"/><line x1="130.00" y1="292.30" x2="130.00" y2="328.50"/><line x1="130.00" y1="360.30" x2="130.00" y2="410.30"/><line x1="130.00" y1="410.30" x2="130.00" y2="434.00"/><line x1="180.50" y1="185.30" x2="180.50" y2="232.90"/><line x1="180.50" y1="256.50" x2="180.50" y2="292.30"/><line x1="180.50" y1="292.30" x2="180.50" y2="328.50"/><line x1="180.50" y1="360.30" x2="180.50" y2="410.30"/><line x1="180.50" y1="410.30" x2="180.50" y2="434.00"/><line x1="255.50" y1="185.30" x2="255.50" y2="232.90"/><line x1="255.50" y1="256.50" x2="255.50" y2="292.30"/><line x1="255.50" y1="292.30" x2="255.50" y2="328.50"/><line x1="255.50" y1="360.30" x2="255.50" y2="410.30"/><line x1="255.50" y1="410.30" x2="255.50" y2="434.00"/><line x1="330.50" y1="82.50" x2="330.50" y2="232.90"/><line x1="330.50" y1="256.50" x2="330.50" y2="292.30"/><line x1="330.50" y1="292.30" x2="330.50" y2="328.50"/><line x1="330.50" y1="360.30" x2="330.50" y2="410.30"/><line x1="330.50" y1="410.30" x2="330.50" y2="434.00"/><line x1="406.50" y1="185.30" x2="406.50" y2="232.90"/><line x1="406.50" y1="256.50" x2="406.50" y2="292.30"/><line x1="406.50" y1="292.30" x2="406.50" y2="328.50"/><line x1="406.50" y1="360.30" x2="406.50" y2="410.30"/><line x1="406.50" y1="410.30" x2="406.50" y2="434.00"/><line x1="481.50" y1="82.50" x2="481.50" y2="232.90"/><line x1="481.50" y1="256.50" x2="481.50" y2="292.30"/><line x1="481.50" y1="292.30" x2="481.50" y2="328.50"/><line x1="481.50" y1="360.30" x2="481.50" y2="410.30"/><line x1="481.50" y1="410.30" x2="481.50" y2="434.00"/><line x1="556.50" y1="185.30" x2="556.50" y2="232.90"/><line x1="556.50" y1="256.50" x2="556.50" y2="292.30"/><line x1="556.50" y1="292.30" x2="556.50" y2="328.50"/><line x1="556.50" y1="360.30" x2="556.50" y2="410.30"/><line x1="556.50" y1="410.30" x2="556.50" y2="434.00"/><line x1="632.20" y1="82.50" x2="632.20" y2="232.90"/><line x1="632.20" y1="256.50" x2="632.20" y2="292.30"/><line x1="632.20" y1="292.30" x2="632.20" y2="328.50"/><line x1="632.20" y1="360.30" x2="632.20" y2="410.30"/><line x1="632.20" y1="410.30" x2="632.20" y2="434.00"/><line x1="707.50" y1="185.30" x2="707.50" y2="232.90"/><line x1="707.50" y1="256.50" x2="707.50" y2="292.30"/><line x1="707.50" y1="292.30" x2="707.50" y2="328.50"/><line x1="707.50" y1="360.30" x2="707.50" y2="410.30"/><line x1="707.50" y1="410.30" x2="707.50" y2="434.00"/></g></svg>
<span style="transform:scaleX(0.8842);position:absolute;left:426.3px;top:344.90px;font-family:'Liberation Sans', sans-serif;font-size:9.6px;line-height:9.6px;color:#111;font-weight:700;white-space:nowrap;font-style:italic;transform-origin:0 0;">Освітній</span>
<span style="transform:scaleX(0.9238);position:absolute;left:403.7px;top:357.10px;font-family:'Liberation Sans', sans-serif;font-size:9.6px;line-height:9.6px;color:#111;font-weight:700;white-space:nowrap;font-style:italic;transform-origin:0 0;">ступінь/освітньо-</span>
<span style="transform:scaleX(0.8982);position:absolute;left:417.2px;top:368.90px;font-family:'Liberation Sans', sans-serif;font-size:9.6px;line-height:9.6px;color:#111;font-weight:700;white-space:nowrap;font-style:italic;transform-origin:0 0;">професійний</span>
<span style="transform:scaleX(0.8978);position:absolute;left:428.3px;top:380.90px;font-family:'Liberation Sans', sans-serif;font-size:9.6px;line-height:9.6px;color:#111;font-weight:700;white-space:nowrap;font-style:italic;transform-origin:0 0;">ступінь</span>
<span style="transform:scaleX(0.9079);position:absolute;left:524.8px;top:308.90px;font-family:'Liberation Sans', sans-serif;font-size:9.6px;line-height:9.6px;color:#111;font-weight:700;white-space:nowrap;font-style:italic;transform-origin:0 0;">Кількість здобувачів освіти, які</span>
<span style="transform:scaleX(0.9321);position:absolute;left:515.4px;top:321.10px;font-family:'Liberation Sans', sans-serif;font-size:9.6px;line-height:9.6px;color:#111;font-weight:700;white-space:nowrap;font-style:italic;transform-origin:0 0;">навчались за ДФЗО у 2021/2022р. До</span>
<span style="transform:scaleX(0.9330);position:absolute;left:573.6px;top:332.80px;font-family:'Liberation Sans', sans-serif;font-size:9.6px;line-height:9.6px;color:#111;font-weight:700;white-space:nowrap;font-style:italic;transform-origin:0 0;">24.02.2022</span>
<span style="transform:scaleX(0.9211);position:absolute;left:563.5px;top:345.00px;font-family:'Liberation Sans', sans-serif;font-size:9.6px;line-height:9.6px;color:#111;font-weight:700;white-space:nowrap;font-style:italic;transform-origin:0 0;">(за даними ЗО)</span>
<span style="transform:scaleX(0.8994);position:absolute;left:708.3px;top:308.90px;font-family:'Liberation Sans', sans-serif;font-size:9.6px;line-height:9.6px;color:#111;font-weight:700;white-space:nowrap;font-style:italic;transform-origin:0 0;">Кількість здобувачів освіти,</span>
<span style="transform:scaleX(0.9212);position:absolute;left:718.1px;top:321.10px;font-family:'Liberation Sans', sans-serif;font-size:9.6px;line-height:9.6px;color:#111;font-weight:700;white-space:nowrap;font-style:italic;transform-origin:0 0;">які навчались за ДФЗО у</span>
<span style="transform:scaleX(1.0024);position:absolute;left:727px;top:332.80px;font-family:'Liberation Sans', sans-serif;font-size:9.6px;line-height:9.6px;color:#111;font-weight:700;white-space:nowrap;font-style:italic;transform-origin:0 0;">2021/2022н.р. після</span>
<span style="transform:scaleX(0.9450);position:absolute;left:714.6px;top:345.00px;font-family:'Liberation Sans', sans-serif;font-size:9.6px;line-height:9.6px;color:#111;font-weight:700;white-space:nowrap;font-style:italic;transform-origin:0 0;">24.02.2022 (за даними ЗО)</span>
<span style="transform:scaleX(0.9008);position:absolute;left:858.7px;top:308.90px;font-family:'Liberation Sans', sans-serif;font-size:9.6px;line-height:9.6px;color:#111;font-weight:700;white-space:nowrap;font-style:italic;transform-origin:0 0;">Кількість здобувачів освіти,</span>
<span style="transform:scaleX(0.9122);position:absolute;left:855.6px;top:321.10px;font-family:'Liberation Sans', sans-serif;font-size:9.6px;line-height:9.6px;color:#111;font-weight:700;white-space:nowrap;font-style:italic;transform-origin:0 0;">що мали здобувачів освіти на</span>
<span style="transform:scaleX(0.9138);position:absolute;left:910.2px;top:332.80px;font-family:'Liberation Sans', sans-serif;font-size:9.6px;line-height:9.6px;color:#111;font-weight:700;white-space:nowrap;font-style:italic;transform-origin:0 0;">ДФЗО</span>
<span style="transform:scaleX(0.9121);position:absolute;left:1027.9px;top:308.80px;font-family:'Liberation Sans', sans-serif;font-size:9.6px;line-height:9.6px;color:#111;font-weight:700;white-space:nowrap;font-style:italic;transform-origin:0 0;">Кількість кураторів</span>
<span style="transform:scaleX(0.8411);position:absolute;left:506.9px;top:411.20px;font-family:'Liberation Sans', sans-serif;font-size:9.6px;line-height:9.6px;color:#111;font-weight:700;white-space:nowrap;font-style:normal;transform-origin:0 0;">Всього</span>
<span style="transform:scaleX(0.8899);position:absolute;left:574.3px;top:411.30px;font-family:'Liberation Sans', sans-serif;font-size:9.6px;line-height:9.6px;color:#111;font-weight:700;white-space:nowrap;font-style:normal;transform-origin:0 0;">Чол.</span>
<span style="transform:scaleX(0.9395);position:absolute;left:649.4px;top:411.30px;font-family:'Liberation Sans', sans-serif;font-size:9.6px;line-height:9.6px;color:#111;font-weight:700;white-space:nowrap;font-style:normal;transform-origin:0 0;">Жін.</span>
<span style="transform:scaleX(0.8852);position:absolute;left:724.7px;top:411.30px;font-family:'Liberation Sans', sans-serif;font-size:9.6px;line-height:9.6px;color:#111;font-weight:700;white-space:nowrap;font-style:normal;transform-origin:0 0;">Чол.</span>
<span style="transform:scaleX(0.9193);position:absolute;left:800.6px;top:411.30px;font-family:'Liberation Sans', sans-serif;font-size:9.6px;line-height:9.6px;color:#111;font-weight:700;white-space:nowrap;font-style:normal;transform-origin:0 0;">Жін.</span>
<span style="transform:scaleX(0.9543);position:absolute;left:854.7px;top:411.30px;font-family:'Liberation Sans', sans-serif;font-size:9.6px;line-height:9.6px;color:#111;font-weight:700;white-space:nowrap;font-style:normal;transform-origin:0 0;">До 24.02.2022</span>
<span style="transform:scaleX(0.8461);position:absolute;left:949.3px;top:411.30px;font-family:'Liberation Sans', sans-serif;font-size:9.6px;line-height:9.6px;color:#111;font-weight:700;white-space:nowrap;font-style:normal;transform-origin:0 0;">Після</span>
<span style="transform:scaleX(0.9518);position:absolute;left:937.6px;top:423.00px;font-family:'Liberation Sans', sans-serif;font-size:9.6px;line-height:9.6px;color:#111;font-weight:700;white-space:nowrap;font-style:normal;transform-origin:0 0;">24.02.2022</span>
<span style="transform:scaleX(0.9606);position:absolute;left:1005px;top:411.10px;font-family:'Liberation Sans', sans-serif;font-size:9.6px;line-height:9.6px;color:#111;font-weight:700;white-space:nowrap;font-style:normal;transform-origin:0 0;">До 24.02.2022</span>
<span style="transform:scaleX(0.8686);position:absolute;left:1099.6px;top:411.10px;font-family:'Liberation Sans', sans-serif;font-size:9.6px;line-height:9.6px;color:#111;font-weight:700;white-space:nowrap;font-style:normal;transform-origin:0 0;">Після</span>
<span style="transform:scaleX(0.9539);position:absolute;left:1088px;top:423.20px;font-family:'Liberation Sans', sans-serif;font-size:9.6px;line-height:9.6px;color:#111;font-weight:700;white-space:nowrap;font-style:normal;transform-origin:0 0;">24.02.2022</span>
<span style="transform:scaleX(0.9115);position:absolute;left:401.8px;top:459.31px;font-family:'Liberation Sans', sans-serif;font-size:11px;line-height:11px;color:#111;font-weight:700;white-space:nowrap;font-style:italic;transform-origin:0 0;">Університети</span>
<span style="transform:scaleX(0.9802);position:absolute;left:401.7px;top:554.61px;font-family:'Liberation Sans', sans-serif;font-size:11px;line-height:11px;color:#111;font-weight:700;white-space:nowrap;font-style:italic;transform-origin:0 0;">Коледжі</span>
<span style="transform:scaleX(0.9382);position:absolute;left:401.8px;top:482.59px;font-family:'Liberation Sans', sans-serif;font-size:9.4px;line-height:9.4px;color:#111;font-weight:400;white-space:nowrap;font-style:normal;transform-origin:0 0;">Бакалавр</span>
<span style="transform:scaleX(0.9778);position:absolute;left:401.7px;top:518.09px;font-family:'Liberation Sans', sans-serif;font-size:9.4px;line-height:9.4px;color:#111;font-weight:400;white-space:nowrap;font-style:normal;transform-origin:0 0;">Магістр</span>
<span style="transform:scaleX(1.0174);position:absolute;left:401.7px;top:586.19px;font-family:'Liberation Sans', sans-serif;font-size:9.4px;line-height:9.4px;color:#111;font-weight:400;white-space:nowrap;font-style:normal;transform-origin:0 0;">Молодший</span>
<span style="transform:scaleX(0.9981);position:absolute;left:401.7px;top:598.49px;font-family:'Liberation Sans', sans-serif;font-size:9.4px;line-height:9.4px;color:#111;font-weight:400;white-space:nowrap;font-style:normal;transform-origin:0 0;">спеціаліст/молодши</span>
<span style="transform:scaleX(0.9666);position:absolute;left:401.7px;top:609.69px;font-family:'Liberation Sans', sans-serif;font-size:9.4px;line-height:9.4px;color:#111;font-weight:400;white-space:nowrap;font-style:normal;transform-origin:0 0;">й бакалавр</span>
<span style="transform:scaleX(0.9487);position:absolute;left:401.7px;top:636.59px;font-family:'Liberation Sans', sans-serif;font-size:8.8px;line-height:8.8px;color:#111;font-weight:700;white-space:nowrap;font-style:normal;transform-origin:0 0;">Усього</span>
<span style="transform:scaleX(0.9772);position:absolute;left:513.5500000000001px;top:482.59px;font-family:'Liberation Sans', sans-serif;font-size:9.4px;line-height:9.4px;color:#111;font-weight:400;white-space:nowrap;font-style:italic;transform-origin:0 0;">347</span>
<span style="transform:scaleX(0.9772);position:absolute;left:576.35px;top:482.59px;font-family:'Liberation Sans', sans-serif;font-size:9.4px;line-height:9.4px;color:#111;font-weight:400;white-space:nowrap;font-style:italic;transform-origin:0 0;">242</span>
<span style="transform:scaleX(0.9772);position:absolute;left:651.35px;top:482.59px;font-family:'Liberation Sans', sans-serif;font-size:9.4px;line-height:9.4px;color:#111;font-weight:400;white-space:nowrap;font-style:italic;transform-origin:0 0;">105</span>
<span style="transform:scaleX(0.9772);position:absolute;left:726.85px;top:482.59px;font-family:'Liberation Sans', sans-serif;font-size:9.4px;line-height:9.4px;color:#111;font-weight:400;white-space:nowrap;font-style:italic;transform-origin:0 0;">174</span>
<span style="transform:scaleX(0.9772);position:absolute;left:804.9px;top:482.59px;font-family:'Liberation Sans', sans-serif;font-size:9.4px;line-height:9.4px;color:#111;font-weight:400;white-space:nowrap;font-style:italic;transform-origin:0 0;">68</span>
<span style="transform:scaleX(0.9772);position:absolute;left:880.0px;top:482.59px;font-family:'Liberation Sans', sans-serif;font-size:9.4px;line-height:9.4px;color:#111;font-weight:400;white-space:nowrap;font-style:italic;transform-origin:0 0;">20</span>
<span style="transform:scaleX(0.9772);position:absolute;left:955.3px;top:482.59px;font-family:'Liberation Sans', sans-serif;font-size:9.4px;line-height:9.4px;color:#111;font-weight:400;white-space:nowrap;font-style:italic;transform-origin:0 0;">15</span>
<span style="transform:scaleX(0.9772);position:absolute;left:1028.25px;top:482.59px;font-family:'Liberation Sans', sans-serif;font-size:9.4px;line-height:9.4px;color:#111;font-weight:400;white-space:nowrap;font-style:italic;transform-origin:0 0;">107</span>
<span style="transform:scaleX(0.9772);position:absolute;left:1106.1000000000001px;top:482.59px;font-family:'Liberation Sans', sans-serif;font-size:9.4px;line-height:9.4px;color:#111;font-weight:400;white-space:nowrap;font-style:italic;transform-origin:0 0;">94</span>
<span style="transform:scaleX(0.9772);position:absolute;left:513.5500000000001px;top:517.99px;font-family:'Liberation Sans', sans-serif;font-size:9.4px;line-height:9.4px;color:#111;font-weight:400;white-space:nowrap;font-style:italic;transform-origin:0 0;">238</span>
<span style="transform:scaleX(0.9772);position:absolute;left:576.35px;top:517.99px;font-family:'Liberation Sans', sans-serif;font-size:9.4px;line-height:9.4px;color:#111;font-weight:400;white-space:nowrap;font-style:italic;transform-origin:0 0;">124</span>
<span style="transform:scaleX(1.0232);position:absolute;left:651.35px;top:517.99px;font-family:'Liberation Sans', sans-serif;font-size:9.4px;line-height:9.4px;color:#111;font-weight:400;white-space:nowrap;font-style:italic;transform-origin:0 0;">114</span>
<span style="transform:scaleX(0.9772);position:absolute;left:729.4px;top:517.99px;font-family:'Liberation Sans', sans-serif;font-size:9.4px;line-height:9.4px;color:#111;font-weight:400;white-space:nowrap;font-style:italic;transform-origin:0 0;">91</span>
<span style="transform:scaleX(0.9772);position:absolute;left:802.35px;top:517.99px;font-family:'Liberation Sans', sans-serif;font-size:9.4px;line-height:9.4px;color:#111;font-weight:400;white-space:nowrap;font-style:italic;transform-origin:0 0;">108</span>
<span style="transform:scaleX(0.9772);position:absolute;left:880.0px;top:517.99px;font-family:'Liberation Sans', sans-serif;font-size:9.4px;line-height:9.4px;color:#111;font-weight:400;white-space:nowrap;font-style:italic;transform-origin:0 0;">18</span>
<span style="transform:scaleX(0.9772);position:absolute;left:955.3px;top:517.99px;font-family:'Liberation Sans', sans-serif;font-size:9.4px;line-height:9.4px;color:#111;font-weight:400;white-space:nowrap;font-style:italic;transform-origin:0 0;">16</span>
<span style="transform:scaleX(0.9772);position:absolute;left:1030.8000000000002px;top:517.99px;font-family:'Liberation Sans', sans-serif;font-size:9.4px;line-height:9.4px;color:#111;font-weight:400;white-space:nowrap;font-style:italic;transform-origin:0 0;">87</span>
<span style="transform:scaleX(0.9772);position:absolute;left:1106.1000000000001px;top:517.99px;font-family:'Liberation Sans', sans-serif;font-size:9.4px;line-height:9.4px;color:#111;font-weight:400;white-space:nowrap;font-style:italic;transform-origin:0 0;">68</span>
<span style="transform:scaleX(0.9633);position:absolute;left:515.3000000000001px;top:586.51px;font-family:'Liberation Sans', sans-serif;font-size:11px;line-height:11px;color:#111;font-weight:400;white-space:nowrap;font-style:italic;transform-origin:0 0;">96</span>
<span style="transform:scaleX(0.9633);position:absolute;left:578.1px;top:586.51px;font-family:'Liberation Sans', sans-serif;font-size:11px;line-height:11px;color:#111;font-weight:400;white-space:nowrap;font-style:italic;transform-origin:0 0;">81</span>
<span style="transform:scaleX(0.9633);position:absolute;left:656.05px;top:586.51px;font-family:'Liberation Sans', sans-serif;font-size:11px;line-height:11px;color:#111;font-weight:400;white-space:nowrap;font-style:italic;transform-origin:0 0;">9</span>
<span style="transform:scaleX(0.9633);position:absolute;left:728.6px;top:586.51px;font-family:'Liberation Sans', sans-serif;font-size:11px;line-height:11px;color:#111;font-weight:400;white-space:nowrap;font-style:italic;transform-origin:0 0;">59</span>
<span style="transform:scaleX(0.9633);position:absolute;left:807.05px;top:586.51px;font-family:'Liberation Sans', sans-serif;font-size:11px;line-height:11px;color:#111;font-weight:400;white-space:nowrap;font-style:italic;transform-origin:0 0;">6</span>
<span style="transform:scaleX(0.9633);position:absolute;left:882.15px;top:586.51px;font-family:'Liberation Sans', sans-serif;font-size:11px;line-height:11px;color:#111;font-weight:400;white-space:nowrap;font-style:italic;transform-origin:0 0;">9</span>
<span style="transform:scaleX(0.9633);position:absolute;left:957.4499999999999px;top:586.51px;font-family:'Liberation Sans', sans-serif;font-size:11px;line-height:11px;color:#111;font-weight:400;white-space:nowrap;font-style:italic;transform-origin:0 0;">7</span>
<span style="transform:scaleX(0.9633);position:absolute;left:1030.0px;top:586.51px;font-family:'Liberation Sans', sans-serif;font-size:11px;line-height:11px;color:#111;font-weight:400;white-space:nowrap;font-style:italic;transform-origin:0 0;">20</span>
<span style="transform:scaleX(0.9633);position:absolute;left:1105.3px;top:586.51px;font-family:'Liberation Sans', sans-serif;font-size:11px;line-height:11px;color:#111;font-weight:400;white-space:nowrap;font-style:italic;transform-origin:0 0;">16</span>
<span style="transform:scaleX(0.9804);position:absolute;left:512.2px;top:636.21px;font-family:'Liberation Sans', sans-serif;font-size:11px;line-height:11px;color:#111;font-weight:700;white-space:nowrap;font-style:italic;transform-origin:0 0;">681</span>
<span style="transform:scaleX(0.9804);position:absolute;left:575.0px;top:636.21px;font-family:'Liberation Sans', sans-serif;font-size:11px;line-height:11px;color:#111;font-weight:700;white-space:nowrap;font-style:italic;transform-origin:0 0;">447</span>
<span style="transform:scaleX(0.9804);position:absolute;left:650.0px;top:636.21px;font-family:'Liberation Sans', sans-serif;font-size:11px;line-height:11px;color:#111;font-weight:700;white-space:nowrap;font-style:italic;transform-origin:0 0;">228</span>
<span style="transform:scaleX(0.9804);position:absolute;left:725.5px;top:636.21px;font-family:'Liberation Sans', sans-serif;font-size:11px;line-height:11px;color:#111;font-weight:700;white-space:nowrap;font-style:italic;transform-origin:0 0;">324</span>
<span style="transform:scaleX(0.9804);position:absolute;left:801.0px;top:636.21px;font-family:'Liberation Sans', sans-serif;font-size:11px;line-height:11px;color:#111;font-weight:700;white-space:nowrap;font-style:italic;transform-origin:0 0;">182</span>
<span style="transform:scaleX(0.9796);position:absolute;left:879.1px;top:636.21px;font-family:'Liberation Sans', sans-serif;font-size:11px;line-height:11px;color:#111;font-weight:700;white-space:nowrap;font-style:italic;transform-origin:0 0;">47</span>
<span style="transform:scaleX(0.9796);position:absolute;left:954.4px;top:636.21px;font-family:'Liberation Sans', sans-serif;font-size:11px;line-height:11px;color:#111;font-weight:700;white-space:nowrap;font-style:italic;transform-origin:0 0;">38</span>
<span style="transform:scaleX(0.9804);position:absolute;left:1026.9px;top:636.21px;font-family:'Liberation Sans', sans-serif;font-size:11px;line-height:11px;color:#111;font-weight:700;white-space:nowrap;font-style:italic;transform-origin:0 0;">214</span>
<span style="transform:scaleX(0.9804);position:absolute;left:1102.2px;top:636.21px;font-family:'Liberation Sans', sans-serif;font-size:11px;line-height:11px;color:#111;font-weight:700;white-space:nowrap;font-style:italic;transform-origin:0 0;">178</span>
<span style="transform:scaleX(1.0531);position:absolute;left:1150px;top:659.91px;font-family:'Liberation Sans', sans-serif;font-size:11px;line-height:11px;color:#222;font-weight:400;white-space:nowrap;font-style:normal;transform-origin:0 0;">19</span>
<svg style="position:absolute;left:642px;top:392px;" width="7" height="14" viewBox="0 0 7 14"><path d="M1 1 Q3.5 1 3.5 3 L3.5 11 Q3.5 13 1 13 M6 1 Q3.5 1 3.5 3 M6 13 Q3.5 13 3.5 11" fill="none" stroke="#222" stroke-width="0.9"/></svg>
<svg style="position:absolute;left:668px;top:264px;" width="68" height="2" viewBox="0 0 68 2"><polyline points="0,0.3 2,1.5 4,0.3 6,1.5 8,0.3 10,1.5 12,0.3 14,1.5 16,0.3 18,1.5 20,0.3 22,1.5 24,0.3 26,1.5 28,0.3 30,1.5 32,0.3 34,1.5 36,0.3 38,1.5 40,0.3 42,1.5 44,0.3 46,1.5 48,0.3 50,1.5 52,0.3 54,1.5 56,0.3 58,1.5 60,0.3 62,1.5 64,0.3 66,1.5" fill="none" stroke="#e0302a" stroke-width="0.7"/></svg>
<svg style="position:absolute;left:740px;top:264px;" width="93" height="2" viewBox="0 0 93 2"><polyline points="0,0.3 2,1.5 4,0.3 6,1.5 8,0.3 10,1.5 12,0.3 14,1.5 16,0.3 18,1.5 20,0.3 22,1.5 24,0.3 26,1.5 28,0.3 30,1.5 32,0.3 34,1.5 36,0.3 38,1.5 40,0.3 42,1.5 44,0.3 46,1.5 48,0.3 50,1.5 52,0.3 54,1.5 56,0.3 58,1.5 60,0.3 62,1.5 64,0.3 66,1.5 68,0.3 70,1.5 72,0.3 74,1.5 76,0.3 78,1.5 80,0.3 82,1.5 84,0.3 86,1.5 88,0.3 90,1.5 92,0.3" fill="none" stroke="#e0302a" stroke-width="0.7"/></svg>
<svg style="position:absolute;left:661px;top:280px;" width="30" height="2" viewBox="0 0 30 2"><polyline points="0,0.3 2,1.5 4,0.3 6,1.5 8,0.3 10,1.5 12,0.3 14,1.5 16,0.3 18,1.5 20,0.3 22,1.5 24,0.3 26,1.5 28,0.3" fill="none" stroke="#e0302a" stroke-width="0.7"/></svg>
<svg style="position:absolute;left:694px;top:280px;" width="44" height="2" viewBox="0 0 44 2"><polyline points="0,0.3 2,1.5 4,0.3 6,1.5 8,0.3 10,1.5 12,0.3 14,1.5 16,0.3 18,1.5 20,0.3 22,1.5 24,0.3 26,1.5 28,0.3 30,1.5 32,0.3 34,1.5 36,0.3 38,1.5 40,0.3 42,1.5" fill="none" stroke="#e0302a" stroke-width="0.7"/></svg>
<svg style="position:absolute;left:795px;top:280px;" width="29" height="2" viewBox="0 0 29 2"><polyline points="0,0.3 2,1.5 4,0.3 6,1.5 8,0.3 10,1.5 12,0.3 14,1.5 16,0.3 18,1.5 20,0.3 22,1.5 24,0.3 26,1.5 28,0.3" fill="none" stroke="#e0302a" stroke-width="0.7"/></svg>
<svg style="position:absolute;left:574px;top:420px;" width="20" height="2" viewBox="0 0 20 2"><polyline points="0,0.3 2,1.5 4,0.3 6,1.5 8,0.3 10,1.5 12,0.3 14,1.5 16,0.3 18,1.5" fill="none" stroke="#e0302a" stroke-width="0.7"/></svg>
<svg style="position:absolute;left:649px;top:420px;" width="20" height="2" viewBox="0 0 20 2"><polyline points="0,0.3 2,1.5 4,0.3 6,1.5 8,0.3 10,1.5 12,0.3 14,1.5 16,0.3 18,1.5" fill="none" stroke="#e0302a" stroke-width="0.7"/></svg>
<svg style="position:absolute;left:724px;top:420px;" width="20" height="2" viewBox="0 0 20 2"><polyline points="0,0.3 2,1.5 4,0.3 6,1.5 8,0.3 10,1.5 12,0.3 14,1.5 16,0.3 18,1.5" fill="none" stroke="#e0302a" stroke-width="0.7"/></svg>
<svg style="position:absolute;left:800px;top:420px;" width="20" height="2" viewBox="0 0 20 2"><polyline points="0,0.3 2,1.5 4,0.3 6,1.5 8,0.3 10,1.5 12,0.3 14,1.5 16,0.3 18,1.5" fill="none" stroke="#e0302a" stroke-width="0.7"/></svg>
<svg style="position:absolute;left:791px;top:342px;" width="28" height="2" viewBox="0 0 28 2"><polyline points="0,0.3 2,1.5 4,0.3 6,1.5 8,0.3 10,1.5 12,0.3 14,1.5 16,0.3 18,1.5 20,0.3 22,1.5 24,0.3 26,1.5" fill="none" stroke="#e0302a" stroke-width="0.7"/></svg>
<div style="position:absolute;left:141.3px;top:224.5px;width:132.6px;height:74.5px;background:#fff;box-shadow:0 0 0 0.7px #c9c9c9;"></div>
<span style="transform:scaleX(0.8366);position:absolute;left:174px;top:230.44px;font-family:'Liberation Sans', sans-serif;font-size:4px;line-height:4px;color:#c0303a;font-weight:400;white-space:nowrap;font-style:normal;transform-origin:0 0;">ТРОХИ СТАТИСТИКИ</span>
<span style="transform:scaleX(1.1389);position:absolute;left:163px;top:234.23px;font-family:'Liberation Sans', sans-serif;font-size:2.6px;line-height:2.6px;color:#d0606a;font-weight:400;white-space:nowrap;font-style:normal;transform-origin:0 0;">(за даними, поданими закладами освіти)</span>
<svg style="position:absolute;left:150px;top:240.0px;" width="12" height="10" viewBox="0 0 12 10"><circle cx="3" cy="3" r="1.6" fill="#c0282d"/><circle cx="7.5" cy="2.5" r="1.6" fill="#c0282d"/><circle cx="5" cy="6.5" r="1.8" fill="#c0282d"/><circle cx="9.5" cy="6.5" r="1.4" fill="#c0282d"/><circle cx="2" cy="8" r="1.2" fill="#c0282d"/></svg>
<div style="position:absolute;left:162.5px;top:241.8px;width:1px;height:1px;background:#555;"></div>
<span style="transform:scaleX(0.9535);position:absolute;left:165px;top:241.12px;font-family:'Liberation Sans', sans-serif;font-size:2.4px;line-height:2.4px;color:#666;font-weight:400;white-space:nowrap;font-style:normal;transform-origin:0 0;">Кількість ДФЗО у взаємодії ФПО, у 2021/2022н.р. – 37</span>
<div style="position:absolute;left:162.5px;top:247.1px;width:1px;height:1px;background:#555;"></div>
<span style="transform:scaleX(0.9535);position:absolute;left:165px;top:246.42px;font-family:'Liberation Sans', sans-serif;font-size:2.4px;line-height:2.4px;color:#666;font-weight:400;white-space:nowrap;font-style:normal;transform-origin:0 0;">Кількість ДФЗО у взаємодії ФПО, у 2022/2023н.р. – 86</span>
<div style="position:absolute;left:144.6px;top:255.2px;width:93px;height:3.6px;background:#a9a9a9;"></div>
<div style="position:absolute;left:196px;top:256.5px;width:8px;height:0.7px;background:#e8e8e8;"></div>
<div style="position:absolute;left:214px;top:256.5px;width:8px;height:0.7px;background:#e8e8e8;"></div>
<div style="position:absolute;left:228px;top:256.5px;width:8px;height:0.7px;background:#e8e8e8;"></div>
<div style="position:absolute;left:144.6px;top:258.8px;width:93px;height:9.8px;background:#dedede;"></div>
<div style="position:absolute;left:146.5px;top:261.0px;width:30px;height:0.7px;background:#b9b9b9;"></div>
<div style="position:absolute;left:146.5px;top:263.40000000000003px;width:25px;height:0.7px;background:#c4c4c4;"></div>
<div style="position:absolute;left:146.5px;top:265.8px;width:22px;height:0.7px;background:#c4c4c4;"></div>
<div style="position:absolute;left:199px;top:261.3px;width:4px;height:0.7px;background:#b5b5b5;"></div>
<div style="position:absolute;left:216px;top:261.3px;width:4px;height:0.7px;background:#b5b5b5;"></div>
<div style="position:absolute;left:230px;top:261.3px;width:4px;height:0.7px;background:#b5b5b5;"></div>
<div style="position:absolute;left:144.6px;top:268.6px;width:93px;height:7.6px;background:#efefef;"></div>
<div style="position:absolute;left:146.5px;top:270.8px;width:30px;height:0.7px;background:#b9b9b9;"></div>
<div style="position:absolute;left:146.5px;top:273.20000000000005px;width:25px;height:0.7px;background:#c4c4c4;"></div>
<div style="position:absolute;left:199px;top:271.1px;width:4px;height:0.7px;background:#b5b5b5;"></div>
<div style="position:absolute;left:216px;top:271.1px;width:4px;height:0.7px;background:#b5b5b5;"></div>
<div style="position:absolute;left:230px;top:271.1px;width:4px;height:0.7px;background:#b5b5b5;"></div>
<div style="position:absolute;left:144.6px;top:276.20000000000005px;width:93px;height:9.8px;background:#dedede;"></div>
<div style="position:absolute;left:146.5px;top:278.40000000000003px;width:30px;height:0.7px;background:#b9b9b9;"></div>
<div style="position:absolute;left:146.5px;top:280.80000000000007px;width:25px;height:0.7px;background:#c4c4c4;"></div>
<div style="position:absolute;left:146.5px;top:283.20000000000005px;width:22px;height:0.7px;background:#c4c4c4;"></div>
<div style="position:absolute;left:199px;top:278.70000000000005px;width:4px;height:0.7px;background:#b5b5b5;"></div>
<div style="position:absolute;left:216px;top:278.70000000000005px;width:4px;height:0.7px;background:#b5b5b5;"></div>
<div style="position:absolute;left:230px;top:278.70000000000005px;width:4px;height:0.7px;background:#b5b5b5;"></div>
<div style="position:absolute;left:144.6px;top:286.00000000000006px;width:93px;height:8.8px;background:#efefef;"></div>
<div style="position:absolute;left:146.5px;top:288.20000000000005px;width:30px;height:0.7px;background:#b9b9b9;"></div>
<div style="position:absolute;left:146.5px;top:290.6000000000001px;width:25px;height:0.7px;background:#c4c4c4;"></div>
<div style="position:absolute;left:199px;top:288.50000000000006px;width:4px;height:0.7px;background:#b5b5b5;"></div>
<div style="position:absolute;left:216px;top:288.50000000000006px;width:4px;height:0.7px;background:#b5b5b5;"></div>
<div style="position:absolute;left:230px;top:288.50000000000006px;width:4px;height:0.7px;background:#b5b5b5;"></div>
<div style="position:absolute;left:237px;top:228.8px;width:35px;height:24px;overflow:hidden;background:#b5b0a6;"><div style="position:absolute;left:-2px;top:-2px;width:39px;height:28px;filter:blur(0.5px);"><div style="position:absolute;left:2px;top:2px;width:35px;height:24px;background:linear-gradient(90deg,#9a958a 0%,#c9c3b6 30%,#aaa596 70%,#8c8a70 100%);"></div><div style="position:absolute;left:30px;top:2px;width:5px;height:22px;background:repeating-linear-gradient(180deg,#a89a5a 0 3px,#5e6a7a 3px 5px);"></div><div style="position:absolute;left:12px;top:4px;width:6px;height:6px;border-radius:50%;background:#d6b29a;"></div><div style="position:absolute;left:8px;top:8px;width:15px;height:9px;border-radius:5px 5px 0 0;background:#262c3e;"></div><div style="position:absolute;left:21px;top:2px;width:6px;height:6px;border-radius:50%;background:#c9a58e;"></div><div style="position:absolute;left:19px;top:6px;width:11px;height:10px;border-radius:4px 4px 0 0;background:#222839;"></div><div style="position:absolute;left:6px;top:15px;width:24px;height:9px;background:linear-gradient(180deg,#d2d0cc 0%,#8f8c88 60%,#5a5855 100%);"></div><div style="position:absolute;left:10px;top:16px;width:10px;height:4px;background:#e6e4e0;"></div><div style="position:absolute;left:0;top:22px;width:35px;height:2px;background:#d8cfae;"></div></div></div>
<div style="position:absolute;left:238.6px;top:264.5px;width:32px;height:23.7px;overflow:hidden;background:#eceef0;"><div style="position:absolute;left:-2px;top:-2px;width:36px;height:28px;filter:blur(0.5px);"><div style="position:absolute;left:2px;top:2px;width:32px;height:24px;background:linear-gradient(135deg,#dfe5ec 0%,#f6f6f4 45%,#e9e6e0 100%);"></div><div style="position:absolute;left:6px;top:1px;width:10px;height:5px;border-radius:50% 50% 20% 20%;background:#f0c419;"></div><div style="position:absolute;left:2px;top:5px;width:6px;height:8px;border-radius:40%;background:#f2c81c;"></div><div style="position:absolute;left:27px;top:3px;width:7px;height:9px;border-radius:50% 20% 20% 50%;background:#f0c419;"></div><div style="position:absolute;left:2px;top:10px;width:7px;height:16px;background:#2b2d33;transform:skewX(10deg);"></div><div style="position:absolute;left:5px;top:2px;width:6px;height:6px;background:#4f6fa0;transform:rotate(30deg);"></div><div style="position:absolute;left:13px;top:8px;width:14px;height:12px;background:#fbfbf8;transform:rotate(-15deg);"></div><div style="position:absolute;left:12px;top:5px;width:5px;height:3px;border-radius:40%;background:#d8b49c;"></div><div style="position:absolute;left:24px;top:14px;width:5px;height:3px;border-radius:40%;background:#d8b49c;"></div><div style="position:absolute;left:14px;top:20px;width:6px;height:3px;border-radius:40%;background:#d8b49c;"></div></div></div>
<div style="position:absolute;left:141.3px;top:311.5px;width:132.6px;height:74.5px;background:#fff;box-shadow:0 0 0 0.7px #c9c9c9;"></div>
<span style="transform:scaleX(0.8366);position:absolute;left:174px;top:317.44px;font-family:'Liberation Sans', sans-serif;font-size:4px;line-height:4px;color:#c0303a;font-weight:400;white-space:nowrap;font-style:normal;transform-origin:0 0;">ТРОХИ СТАТИСТИКИ</span>
<span style="transform:scaleX(1.1389);position:absolute;left:163px;top:321.23px;font-family:'Liberation Sans', sans-serif;font-size:2.6px;line-height:2.6px;color:#d0606a;font-weight:400;white-space:nowrap;font-style:normal;transform-origin:0 0;">(за даними, поданими закладами освіти)</span>
<svg style="position:absolute;left:150px;top:327.0px;" width="12" height="10" viewBox="0 0 12 10"><circle cx="3" cy="3" r="1.6" fill="#c0282d"/><circle cx="7.5" cy="2.5" r="1.6" fill="#c0282d"/><circle cx="5" cy="6.5" r="1.8" fill="#c0282d"/><circle cx="9.5" cy="6.5" r="1.4" fill="#c0282d"/><circle cx="2" cy="8" r="1.2" fill="#c0282d"/></svg>
<div style="position:absolute;left:162.5px;top:328.8px;width:1px;height:1px;background:#555;"></div>
<span style="transform:scaleX(0.9535);position:absolute;left:165px;top:328.12px;font-family:'Liberation Sans', sans-serif;font-size:2.4px;line-height:2.4px;color:#666;font-weight:400;white-space:nowrap;font-style:normal;transform-origin:0 0;">Кількість ДФЗО у взаємодії ФПО, у 2021/2022н.р. – 37</span>
<div style="position:absolute;left:162.5px;top:334.1px;width:1px;height:1px;background:#555;"></div>
<span style="transform:scaleX(0.9535);position:absolute;left:165px;top:333.42px;font-family:'Liberation Sans', sans-serif;font-size:2.4px;line-height:2.4px;color:#666;font-weight:400;white-space:nowrap;font-style:normal;transform-origin:0 0;">Кількість ДФЗО у взаємодії ФПО, у 2022/2023н.р. – 86</span>
<div style="position:absolute;left:144.6px;top:342.2px;width:93px;height:3.6px;background:#a9a9a9;"></div>
<div style="position:absolute;left:196px;top:343.5px;width:8px;height:0.7px;background:#e8e8e8;"></div>
<div style="position:absolute;left:214px;top:343.5px;width:8px;height:0.7px;background:#e8e8e8;"></div>
<div style="position:absolute;left:228px;top:343.5px;width:8px;height:0.7px;background:#e8e8e8;"></div>
<div style="position:absolute;left:144.6px;top:345.8px;width:93px;height:9.8px;background:#dedede;"></div>
<div style="position:absolute;left:146.5px;top:348.0px;width:30px;height:0.7px;background:#b9b9b9;"></div>
<div style="position:absolute;left:146.5px;top:350.40000000000003px;width:25px;height:0.7px;background:#c4c4c4;"></div>
<div style="position:absolute;left:146.5px;top:352.8px;width:22px;height:0.7px;background:#c4c4c4;"></div>
<div style="position:absolute;left:199px;top:348.3px;width:4px;height:0.7px;background:#b5b5b5;"></div>
<div style="position:absolute;left:216px;top:348.3px;width:4px;height:0.7px;background:#b5b5b5;"></div>
<div style="position:absolute;left:230px;top:348.3px;width:4px;height:0.7px;background:#b5b5b5;"></div>
<div style="position:absolute;left:144.6px;top:355.6px;width:93px;height:7.6px;background:#efefef;"></div>
<div style="position:absolute;left:146.5px;top:357.8px;width:30px;height:0.7px;background:#b9b9b9;"></div>
<div style="position:absolute;left:146.5px;top:360.20000000000005px;width:25px;height:0.7px;background:#c4c4c4;"></div>
<div style="position:absolute;left:199px;top:358.1px;width:4px;height:0.7px;background:#b5b5b5;"></div>
<div style="position:absolute;left:216px;top:358.1px;width:4px;height:0.7px;background:#b5b5b5;"></div>
<div style="position:absolute;left:230px;top:358.1px;width:4px;height:0.7px;background:#b5b5b5;"></div>
<div style="position:absolute;left:144.6px;top:363.20000000000005px;width:93px;height:9.8px;background:#dedede;"></div>
<div style="position:absolute;left:146.5px;top:365.40000000000003px;width:30px;height:0.7px;background:#b9b9b9;"></div>
<div style="position:absolute;left:146.5px;top:367.80000000000007px;width:25px;height:0.7px;background:#c4c4c4;"></div>
<div style="position:absolute;left:146.5px;top:370.20000000000005px;width:22px;height:0.7px;background:#c4c4c4;"></div>
<div style="position:absolute;left:199px;top:365.70000000000005px;width:4px;height:0.7px;background:#b5b5b5;"></div>
<div style="position:absolute;left:216px;top:365.70000000000005px;width:4px;height:0.7px;background:#b5b5b5;"></div>
<div style="position:absolute;left:230px;top:365.70000000000005px;width:4px;height:0.7px;background:#b5b5b5;"></div>
<div style="position:absolute;left:144.6px;top:373.00000000000006px;width:93px;height:8.8px;background:#efefef;"></div>
<div style="position:absolute;left:146.5px;top:375.20000000000005px;width:30px;height:0.7px;background:#b9b9b9;"></div>
<div style="position:absolute;left:146.5px;top:377.6000000000001px;width:25px;height:0.7px;background:#c4c4c4;"></div>
<div style="position:absolute;left:199px;top:375.50000000000006px;width:4px;height:0.7px;background:#b5b5b5;"></div>
<div style="position:absolute;left:216px;top:375.50000000000006px;width:4px;height:0.7px;background:#b5b5b5;"></div>
<div style="position:absolute;left:230px;top:375.50000000000006px;width:4px;height:0.7px;background:#b5b5b5;"></div>
<div style="position:absolute;left:237px;top:315.8px;width:35px;height:24px;overflow:hidden;background:#b5b0a6;"><div style="position:absolute;left:-2px;top:-2px;width:39px;height:28px;filter:blur(0.5px);"><div style="position:absolute;left:2px;top:2px;width:35px;height:24px;background:linear-gradient(90deg,#9a958a 0%,#c9c3b6 30%,#aaa596 70%,#8c8a70 100%);"></div><div style="position:absolute;left:30px;top:2px;width:5px;height:22px;background:repeating-linear-gradient(180deg,#a89a5a 0 3px,#5e6a7a 3px 5px);"></div><div style="position:absolute;left:12px;top:4px;width:6px;height:6px;border-radius:50%;background:#d6b29a;"></div><div style="position:absolute;left:8px;top:8px;width:15px;height:9px;border-radius:5px 5px 0 0;background:#262c3e;"></div><div style="position:absolute;left:21px;top:2px;width:6px;height:6px;border-radius:50%;background:#c9a58e;"></div><div style="position:absolute;left:19px;top:6px;width:11px;height:10px;border-radius:4px 4px 0 0;background:#222839;"></div><div style="position:absolute;left:6px;top:15px;width:24px;height:9px;background:linear-gradient(180deg,#d2d0cc 0%,#8f8c88 60%,#5a5855 100%);"></div><div style="position:absolute;left:10px;top:16px;width:10px;height:4px;background:#e6e4e0;"></div><div style="position:absolute;left:0;top:22px;width:35px;height:2px;background:#d8cfae;"></div></div></div>
<div style="position:absolute;left:238.6px;top:351.5px;width:32px;height:23.7px;overflow:hidden;background:#eceef0;"><div style="position:absolute;left:-2px;top:-2px;width:36px;height:28px;filter:blur(0.5px);"><div style="position:absolute;left:2px;top:2px;width:32px;height:24px;background:linear-gradient(135deg,#dfe5ec 0%,#f6f6f4 45%,#e9e6e0 100%);"></div><div style="position:absolute;left:6px;top:1px;width:10px;height:5px;border-radius:50% 50% 20% 20%;background:#f0c419;"></div><div style="position:absolute;left:2px;top:5px;width:6px;height:8px;border-radius:40%;background:#f2c81c;"></div><div style="position:absolute;left:27px;top:3px;width:7px;height:9px;border-radius:50% 20% 20% 50%;background:#f0c419;"></div><div style="position:absolute;left:2px;top:10px;width:7px;height:16px;background:#2b2d33;transform:skewX(10deg);"></div><div style="position:absolute;left:5px;top:2px;width:6px;height:6px;background:#4f6fa0;transform:rotate(30deg);"></div><div style="position:absolute;left:13px;top:8px;width:14px;height:12px;background:#fbfbf8;transform:rotate(-15deg);"></div><div style="position:absolute;left:12px;top:5px;width:5px;height:3px;border-radius:40%;background:#d8b49c;"></div><div style="position:absolute;left:24px;top:14px;width:5px;height:3px;border-radius:40%;background:#d8b49c;"></div><div style="position:absolute;left:14px;top:20px;width:6px;height:3px;border-radius:40%;background:#d8b49c;"></div></div></div>
<div style="position:absolute;left:138.8px;top:395.6px;width:132.6px;height:74.8px;border:2.5px solid #8b1c1c;background:#fff;"></div>
<div style="position:absolute;left:0;top:0;width:1366px;height:728px;transform-origin:0 0;transform:translate(80.937px,361.651px) scale(0.16493);">
<div style="position:absolute;left:365.5px;top:220.5px;width:804px;height:452.5px;background:#fff;box-shadow:0 0 0 0.7px #d0d0d0;"></div>
<div style="position:absolute;left:388px;top:240.5px;width:728px;height:42px;border-radius:6px;background:#b3c4e6;box-shadow:-10px 9px 9px rgba(80,80,80,0.45);"></div>
<div style="position:absolute;left:388px;top:240.5px;width:728px;height:42px;border-radius:6px;background:linear-gradient(180deg,#b9c9ea 0%,#b1c3e6 60%,#acbfe4 100%);box-shadow:inset -2px 0 1px rgba(255,255,255,0.6), inset 2px 0 1px rgba(255,255,255,0.5);"></div>
<span style="transform:scaleX(0.9965);position:absolute;left:409.8px;top:246.62px;font-family:'Liberation Sans', sans-serif;font-size:17.5px;line-height:17.5px;color:#0d0d0d;font-weight:700;white-space:nowrap;font-style:normal;transform-origin:0 0;">Статистика за результатами третього року експерименту впровадження ДФЗО</span>
<span style="transform:scaleX(1.0422);position:absolute;left:646px;top:270.00px;font-family:'Liberation Sans', sans-serif;font-size:10px;line-height:10px;color:#0d0d0d;font-weight:700;white-space:nowrap;font-style:normal;transform-origin:0 0;">(за даними, поданими закладами освіти)</span>
<svg style="position:absolute;left:1125px;top:224px;" width="44" height="27" viewBox="0 0 44 27"><path d="M22 1.6 C33 1.4 41.5 6 41.5 12.5 C41.5 19.5 33 24.6 22 24.6 C11 24.6 1.8 19.5 1.8 13 C1.8 6.5 11 1.8 22 1.6 Z" fill="none" stroke="#b5121b" stroke-width="0.8"/><path d="M16 2.3 C7 3.5 1.5 8 1.6 13 C1.7 19 8 23.5 17 24.5 C10 22.5 5 18.5 5 13.2 C5 8.5 9 4.5 16 2.3 Z" fill="#b5121b"/><text x="9.3" y="12.8" font-family="Liberation Serif" font-weight="700" font-size="6.8" fill="#b5121b">Н</text><text x="15.3" y="15" font-family="Liberation Serif" font-weight="700" font-size="6.8" fill="#b5121b">М</text><text x="22.6" y="17.4" font-family="Liberation Serif" font-weight="700" font-size="6.8" fill="#b5121b">Ц</text><rect x="29" y="10.3" width="8.8" height="9.6" fill="#b5121b"/><path d="M30.3 13.8 Q33.3 11.5 36.5 13.2 M30.3 16.2 Q33.3 18.8 36.5 16.2" stroke="#fff" stroke-width="1" fill="none"/></svg>
<div style="position:absolute;left:395.5px;top:303.5px;width:753.5px;height:351.5px;background:#d7e4bc;"></div>
<svg style="position:absolute;left:366px;top:221px;" width="804" height="452" viewBox="0 0 804 452"><g stroke="#24241f" stroke-width="1.15" stroke-linecap="square"><line x1="29.50" y1="82.50" x2="783.20" y2="82.50"/><line x1="130.00" y1="185.30" x2="783.20" y2="185.30"/><line x1="29.50" y1="232.90" x2="783.20" y2="232.90"/><line x1="29.50" y1="256.50" x2="783.20" y2="256.50"/><line x1="29.50" y1="292.30" x2="783.20" y2="292.30"/><line x1="29.50" y1="328.50" x2="783.20" y2="328.50"/><line x1="29.50" y1="360.30" x2="783.20" y2="360.30"/><line x1="29.50" y1="410.30" x2="783.20" y2="410.30"/><line x1="29.50" y1="434.00" x2="783.20" y2="434.00"/><line x1="29.50" y1="82.00" x2="29.50" y2="434.50"/><line x1="783.20" y1="82.00" x2="783.20" y2="434.50"/><line x1="130.00" y1="82.50" x2="130.00" y2="232.90"/><line x1="130.00" y1="256.50" x2="130.00" y2="292.30"/><line x1="130.00" y1="292.30" x2="130.00" y2="328.50"/><line x1="130.00" y1="360.30" x2="130.00" y2="410.30"/><line x1="130.00" y1="410.30" x2="130.00" y2="434.00"/><line x1="180.50" y1="185.30" x2="180.50" y2="232.90"/><line x1="180.50" y1="256.50" x2="180.50" y2="292.30"/><line x1="180.50" y1="292.30" x2="180.50" y2="328.50"/><line x1="180.50" y1="360.30" x2="180.50" y2="410.30"/><line x1="180.50" y1="410.30" x2="180.50" y2="434.00"/><line x1="255.50" y1="185.30" x2="255.50" y2="232.90"/><line x1="255.50" y1="256.50" x2="255.50" y2="292.30"/><line x1="255.50" y1="292.30" x2="255.50" y2="328.50"/><line x1="255.50" y1="360.30" x2="255.50" y2="410.30"/><line x1="255.50" y1="410.30" x2="255.50" y2="434.00"/><line x1="330.50" y1="82.50" x2="330.50" y2="232.90"/><line x1="330.50" y1="256.50" x2="330.50" y2="292.30"/><line x1="330.50" y1="292.30" x2="330.50" y2="328.50"/><line x1="330.50" y1="360.30" x2="330.50" y2="410.30"/><line x1="330.50" y1="410.30" x2="330.50" y2="434.00"/><line x1="406.50" y1="185.30" x2="406.50" y2="232.90"/><line x1="406.50" y1="256.50" x2="406.50" y2="292.30"/><line x1="406.50" y1="292.30" x2="406.50" y2="328.50"/><line x1="406.50" y1="360.30" x2="406.50" y2="410.30"/><line x1="406.50" y1="410.30" x2="406.50" y2="434.00"/><line x1="481.50" y1="82.50" x2="481.50" y2="232.90"/><line x1="481.50" y1="256.50" x2="481.50" y2="292.30"/><line x1="481.50" y1="292.30" x2="481.50" y2="328.50"/><line x1="481.50" y1="360.30" x2="481.50" y2="410.30"/><line x1="481.50" y1="410.30" x2="481.50" y2="434.00"/><line x1="556.50" y1="185.30" x2="556.50" y2="232.90"/><line x1="556.50" y1="256.50" x2="556.50" y2="292.30"/><line x1="556.50" y1="292.30" x2="556.50" y2="328.50"/><line x1="556.50" y1="360.30" x2="556.50" y2="410.30"/><line x1="556.50" y1="410.30" x2="556.50" y2="434.00"/><line x1="632.20" y1="82.50" x2="632.20" y2="232.90"/><line x1="632.20" y1="256.50" x2="632.20" y2="292.30"/><line x1="632.20" y1="292.30" x2="632.20" y2="328.50"/><line x1="632.20" y1="360.30" x2="632.20" y2="410.30"/><line x1="632.20" y1="410.30" x2="632.20" y2="434.00"/><line x1="707.50" y1="185.30" x2="707.50" y2="232.90"/><line x1="707.50" y1="256.50" x2="707.50" y2="292.30"/><line x1="707.50" y1="292.30" x2="707.50" y2="328.50"/><line x1="707.50" y1="360.30" x2="707.50" y2="410.30"/><line x1="707.50" y1="410.30" x2="707.50" y2="434.00"/></g></svg>
<span style="transform:scaleX(0.8842);position:absolute;left:426.3px;top:344.90px;font-family:'Liberation Sans', sans-serif;font-size:9.6px;line-height:9.6px;color:#111;font-weight:700;white-space:nowrap;font-style:italic;transform-origin:0 0;">Освітній</span>
<span style="transform:scaleX(0.9238);position:absolute;left:403.7px;top:357.10px;font-family:'Liberation Sans', sans-serif;font-size:9.6px;line-height:9.6px;color:#111;font-weight:700;white-space:nowrap;font-style:italic;transform-origin:0 0;">ступінь/освітньо-</span>
<span style="transform:scaleX(0.8982);position:absolute;left:417.2px;top:368.90px;font-family:'Liberation Sans', sans-serif;font-size:9.6px;line-height:9.6px;color:#111;font-weight:700;white-space:nowrap;font-style:italic;transform-origin:0 0;">професійний</span>
<span style="transform:scaleX(0.8978);position:absolute;left:428.3px;top:380.90px;font-family:'Liberation Sans', sans-serif;font-size:9.6px;line-height:9.6px;color:#111;font-weight:700;white-space:nowrap;font-style:italic;transform-origin:0 0;">ступінь</span>
<span style="transform:scaleX(0.9079);position:absolute;left:524.8px;top:308.90px;font-family:'Liberation Sans', sans-serif;font-size:9.6px;line-height:9.6px;color:#111;font-weight:700;white-space:nowrap;font-style:italic;transform-origin:0 0;">Кількість здобувачів освіти, які</span>
<span style="transform:scaleX(0.9321);position:absolute;left:515.4px;top:321.10px;font-family:'Liberation Sans', sans-serif;font-size:9.6px;line-height:9.6px;color:#111;font-weight:700;white-space:nowrap;font-style:italic;transform-origin:0 0;">навчались за ДФЗО у 2021/2022р. До</span>
<span style="transform:scaleX(0.9330);position:absolute;left:573.6px;top:332.80px;font-family:'Liberation Sans', sans-serif;font-size:9.6px;line-height:9.6px;color:#111;font-weight:700;white-space:nowrap;font-style:italic;transform-origin:0 0;">24.02.2022</span>
<span style="transform:scaleX(0.9211);position:absolute;left:563.5px;top:345.00px;font-family:'Liberation Sans', sans-serif;font-size:9.6px;line-height:9.6px;color:#111;font-weight:700;white-space:nowrap;font-style:italic;transform-origin:0 0;">(за даними ЗО)</span>
<span style="transform:scaleX(0.8994);position:absolute;left:708.3px;top:308.90px;font-family:'Liberation Sans', sans-serif;font-size:9.6px;line-height:9.6px;color:#111;font-weight:700;white-space:nowrap;font-style:italic;transform-origin:0 0;">Кількість здобувачів освіти,</span>
<span style="transform:scaleX(0.9212);position:absolute;left:718.1px;top:321.10px;font-family:'Liberation Sans', sans-serif;font-size:9.6px;line-height:9.6px;color:#111;font-weight:700;white-space:nowrap;font-style:italic;transform-origin:0 0;">які навчались за ДФЗО у</span>
<span style="transform:scaleX(1.0024);position:absolute;left:727px;top:332.80px;font-family:'Liberation Sans', sans-serif;font-size:9.6px;line-height:9.6px;color:#111;font-weight:700;white-space:nowrap;font-style:italic;transform-origin:0 0;">2021/2022н.р. після</span>
<span style="transform:scaleX(0.9450);position:absolute;left:714.6px;top:345.00px;font-family:'Liberation Sans', sans-serif;font-size:9.6px;line-height:9.6px;color:#111;font-weight:700;white-space:nowrap;font-style:italic;transform-origin:0 0;">24.02.2022 (за даними ЗО)</span>
<span style="transform:scaleX(0.9008);position:absolute;left:858.7px;top:308.90px;font-family:'Liberation Sans', sans-serif;font-size:9.6px;line-height:9.6px;color:#111;font-weight:700;white-space:nowrap;font-style:italic;transform-origin:0 0;">Кількість здобувачів освіти,</span>
<span style="transform:scaleX(0.9122);position:absolute;left:855.6px;top:321.10px;font-family:'Liberation Sans', sans-serif;font-size:9.6px;line-height:9.6px;color:#111;font-weight:700;white-space:nowrap;font-style:italic;transform-origin:0 0;">що мали здобувачів освіти на</span>
<span style="transform:scaleX(0.9138);position:absolute;left:910.2px;top:332.80px;font-family:'Liberation Sans', sans-serif;font-size:9.6px;line-height:9.6px;color:#111;font-weight:700;white-space:nowrap;font-style:italic;transform-origin:0 0;">ДФЗО</span>
<span style="transform:scaleX(0.9121);position:absolute;left:1027.9px;top:308.80px;font-family:'Liberation Sans', sans-serif;font-size:9.6px;line-height:9.6px;color:#111;font-weight:700;white-space:nowrap;font-style:italic;transform-origin:0 0;">Кількість кураторів</span>
<span style="transform:scaleX(0.8411);position:absolute;left:506.9px;top:411.20px;font-family:'Liberation Sans', sans-serif;font-size:9.6px;line-height:9.6px;color:#111;font-weight:700;white-space:nowrap;font-style:normal;transform-origin:0 0;">Всього</span>
<span style="transform:scaleX(0.8899);position:absolute;left:574.3px;top:411.30px;font-family:'Liberation Sans', sans-serif;font-size:9.6px;line-height:9.6px;color:#111;font-weight:700;white-space:nowrap;font-style:normal;transform-origin:0 0;">Чол.</span>
<span style="transform:scaleX(0.9395);position:absolute;left:649.4px;top:411.30px;font-family:'Liberation Sans', sans-serif;font-size:9.6px;line-height:9.6px;color:#111;font-weight:700;white-space:nowrap;font-style:normal;transform-origin:0 0;">Жін.</span>
<span style="transform:scaleX(0.8852);position:absolute;left:724.7px;top:411.30px;font-family:'Liberation Sans', sans-serif;font-size:9.6px;line-height:9.6px;color:#111;font-weight:700;white-space:nowrap;font-style:normal;transform-origin:0 0;">Чол.</span>
<span style="transform:scaleX(0.9193);position:absolute;left:800.6px;top:411.30px;font-family:'Liberation Sans', sans-serif;font-size:9.6px;line-height:9.6px;color:#111;font-weight:700;white-space:nowrap;font-style:normal;transform-origin:0 0;">Жін.</span>
<span style="transform:scaleX(0.9543);position:absolute;left:854.7px;top:411.30px;font-family:'Liberation Sans', sans-serif;font-size:9.6px;line-height:9.6px;color:#111;font-weight:700;white-space:nowrap;font-style:normal;transform-origin:0 0;">До 24.02.2022</span>
<span style="transform:scaleX(0.8461);position:absolute;left:949.3px;top:411.30px;font-family:'Liberation Sans', sans-serif;font-size:9.6px;line-height:9.6px;color:#111;font-weight:700;white-space:nowrap;font-style:normal;transform-origin:0 0;">Після</span>
<span style="transform:scaleX(0.9518);position:absolute;left:937.6px;top:423.00px;font-family:'Liberation Sans', sans-serif;font-size:9.6px;line-height:9.6px;color:#111;font-weight:700;white-space:nowrap;font-style:normal;transform-origin:0 0;">24.02.2022</span>
<span style="transform:scaleX(0.9606);position:absolute;left:1005px;top:411.10px;font-family:'Liberation Sans', sans-serif;font-size:9.6px;line-height:9.6px;color:#111;font-weight:700;white-space:nowrap;font-style:normal;transform-origin:0 0;">До 24.02.2022</span>
<span style="transform:scaleX(0.8686);position:absolute;left:1099.6px;top:411.10px;font-family:'Liberation Sans', sans-serif;font-size:9.6px;line-height:9.6px;color:#111;font-weight:700;white-space:nowrap;font-style:normal;transform-origin:0 0;">Після</span>
<span style="transform:scaleX(0.9539);position:absolute;left:1088px;top:423.20px;font-family:'Liberation Sans', sans-serif;font-size:9.6px;line-height:9.6px;color:#111;font-weight:700;white-space:nowrap;font-style:normal;transform-origin:0 0;">24.02.2022</span>
<span style="transform:scaleX(0.9115);position:absolute;left:401.8px;top:459.31px;font-family:'Liberation Sans', sans-serif;font-size:11px;line-height:11px;color:#111;font-weight:700;white-space:nowrap;font-style:italic;transform-origin:0 0;">Університети</span>
<span style="transform:scaleX(0.9802);position:absolute;left:401.7px;top:554.61px;font-family:'Liberation Sans', sans-serif;font-size:11px;line-height:11px;color:#111;font-weight:700;white-space:nowrap;font-style:italic;transform-origin:0 0;">Коледжі</span>
<span style="transform:scaleX(0.9382);position:absolute;left:401.8px;top:482.59px;font-family:'Liberation Sans', sans-serif;font-size:9.4px;line-height:9.4px;color:#111;font-weight:400;white-space:nowrap;font-style:normal;transform-origin:0 0;">Бакалавр</span>
<span style="transform:scaleX(0.9778);position:absolute;left:401.7px;top:518.09px;font-family:'Liberation Sans', sans-serif;font-size:9.4px;line-height:9.4px;color:#111;font-weight:400;white-space:nowrap;font-style:normal;transform-origin:0 0;">Магістр</span>
<span style="transform:scaleX(1.0174);position:absolute;left:401.7px;top:586.19px;font-family:'Liberation Sans', sans-serif;font-size:9.4px;line-height:9.4px;color:#111;font-weight:400;white-space:nowrap;font-style:normal;transform-origin:0 0;">Молодший</span>
<span style="transform:scaleX(0.9981);position:absolute;left:401.7px;top:598.49px;font-family:'Liberation Sans', sans-serif;font-size:9.4px;line-height:9.4px;color:#111;font-weight:400;white-space:nowrap;font-style:normal;transform-origin:0 0;">спеціаліст/молодши</span>
<span style="transform:scaleX(0.9666);position:absolute;left:401.7px;top:609.69px;font-family:'Liberation Sans', sans-serif;font-size:9.4px;line-height:9.4px;color:#111;font-weight:400;white-space:nowrap;font-style:normal;transform-origin:0 0;">й бакалавр</span>
<span style="transform:scaleX(0.9487);position:absolute;left:401.7px;top:636.59px;font-family:'Liberation Sans', sans-serif;font-size:8.8px;line-height:8.8px;color:#111;font-weight:700;white-space:nowrap;font-style:normal;transform-origin:0 0;">Усього</span>
<span style="transform:scaleX(0.9772);position:absolute;left:513.5500000000001px;top:482.59px;font-family:'Liberation Sans', sans-serif;font-size:9.4px;line-height:9.4px;color:#111;font-weight:400;white-space:nowrap;font-style:italic;transform-origin:0 0;">347</span>
<span style="transform:scaleX(0.9772);position:absolute;left:576.35px;top:482.59px;font-family:'Liberation Sans', sans-serif;font-size:9.4px;line-height:9.4px;color:#111;font-weight:400;white-space:nowrap;font-style:italic;transform-origin:0 0;">242</span>
<span style="transform:scaleX(0.9772);position:absolute;left:651.35px;top:482.59px;font-family:'Liberation Sans', sans-serif;font-size:9.4px;line-height:9.4px;color:#111;font-weight:400;white-space:nowrap;font-style:italic;transform-origin:0 0;">105</span>
<span style="transform:scaleX(0.9772);position:absolute;left:726.85px;top:482.59px;font-family:'Liberation Sans', sans-serif;font-size:9.4px;line-height:9.4px;color:#111;font-weight:400;white-space:nowrap;font-style:italic;transform-origin:0 0;">174</span>
<span style="transform:scaleX(0.9772);position:absolute;left:804.9px;top:482.59px;font-family:'Liberation Sans', sans-serif;font-size:9.4px;line-height:9.4px;color:#111;font-weight:400;white-space:nowrap;font-style:italic;transform-origin:0 0;">68</span>
<span style="transform:scaleX(0.9772);position:absolute;left:880.0px;top:482.59px;font-family:'Liberation Sans', sans-serif;font-size:9.4px;line-height:9.4px;color:#111;font-weight:400;white-space:nowrap;font-style:italic;transform-origin:0 0;">20</span>
<span style="transform:scaleX(0.9772);position:absolute;left:955.3px;top:482.59px;font-family:'Liberation Sans', sans-serif;font-size:9.4px;line-height:9.4px;color:#111;font-weight:400;white-space:nowrap;font-style:italic;transform-origin:0 0;">15</span>
<span style="transform:scaleX(0.9772);position:absolute;left:1028.25px;top:482.59px;font-family:'Liberation Sans', sans-serif;font-size:9.4px;line-height:9.4px;color:#111;font-weight:400;white-space:nowrap;font-style:italic;transform-origin:0 0;">107</span>
<span style="transform:scaleX(0.9772);position:absolute;left:1106.1000000000001px;top:482.59px;font-family:'Liberation Sans', sans-serif;font-size:9.4px;line-height:9.4px;color:#111;font-weight:400;white-space:nowrap;font-style:italic;transform-origin:0 0;">94</span>
<span style="transform:scaleX(0.9772);position:absolute;left:513.5500000000001px;top:517.99px;font-family:'Liberation Sans', sans-serif;font-size:9.4px;line-height:9.4px;color:#111;font-weight:400;white-space:nowrap;font-style:italic;transform-origin:0 0;">238</span>
<span style="transform:scaleX(0.9772);position:absolute;left:576.35px;top:517.99px;font-family:'Liberation Sans', sans-serif;font-size:9.4px;line-height:9.4px;color:#111;font-weight:400;white-space:nowrap;font-style:italic;transform-origin:0 0;">124</span>
<span style="transform:scaleX(1.0232);position:absolute;left:651.35px;top:517.99px;font-family:'Liberation Sans', sans-serif;font-size:9.4px;line-height:9.4px;color:#111;font-weight:400;white-space:nowrap;font-style:italic;transform-origin:0 0;">114</span>
<span style="transform:scaleX(0.9772);position:absolute;left:729.4px;top:517.99px;font-family:'Liberation Sans', sans-serif;font-size:9.4px;line-height:9.4px;color:#111;font-weight:400;white-space:nowrap;font-style:italic;transform-origin:0 0;">91</span>
<span style="transform:scaleX(0.9772);position:absolute;left:802.35px;top:517.99px;font-family:'Liberation Sans', sans-serif;font-size:9.4px;line-height:9.4px;color:#111;font-weight:400;white-space:nowrap;font-style:italic;transform-origin:0 0;">108</span>
<span style="transform:scaleX(0.9772);position:absolute;left:880.0px;top:517.99px;font-family:'Liberation Sans', sans-serif;font-size:9.4px;line-height:9.4px;color:#111;font-weight:400;white-space:nowrap;font-style:italic;transform-origin:0 0;">18</span>
<span style="transform:scaleX(0.9772);position:absolute;left:955.3px;top:517.99px;font-family:'Liberation Sans', sans-serif;font-size:9.4px;line-height:9.4px;color:#111;font-weight:400;white-space:nowrap;font-style:italic;transform-origin:0 0;">16</span>
<span style="transform:scaleX(0.9772);position:absolute;left:1030.8000000000002px;top:517.99px;font-family:'Liberation Sans', sans-serif;font-size:9.4px;line-height:9.4px;color:#111;font-weight:400;white-space:nowrap;font-style:italic;transform-origin:0 0;">87</span>
<span style="transform:scaleX(0.9772);position:absolute;left:1106.1000000000001px;top:517.99px;font-family:'Liberation Sans', sans-serif;font-size:9.4px;line-height:9.4px;color:#111;font-weight:400;white-space:nowrap;font-style:italic;transform-origin:0 0;">68</span>
<span style="transform:scaleX(0.9633);position:absolute;left:515.3000000000001px;top:586.51px;font-family:'Liberation Sans', sans-serif;font-size:11px;line-height:11px;color:#111;font-weight:400;white-space:nowrap;font-style:italic;transform-origin:0 0;">96</span>
<span style="transform:scaleX(0.9633);position:absolute;left:578.1px;top:586.51px;font-family:'Liberation Sans', sans-serif;font-size:11px;line-height:11px;color:#111;font-weight:400;white-space:nowrap;font-style:italic;transform-origin:0 0;">81</span>
<span style="transform:scaleX(0.9633);position:absolute;left:656.05px;top:586.51px;font-family:'Liberation Sans', sans-serif;font-size:11px;line-height:11px;color:#111;font-weight:400;white-space:nowrap;font-style:italic;transform-origin:0 0;">9</span>
<span style="transform:scaleX(0.9633);position:absolute;left:728.6px;top:586.51px;font-family:'Liberation Sans', sans-serif;font-size:11px;line-height:11px;color:#111;font-weight:400;white-space:nowrap;font-style:italic;transform-origin:0 0;">59</span>
<span style="transform:scaleX(0.9633);position:absolute;left:807.05px;top:586.51px;font-family:'Liberation Sans', sans-serif;font-size:11px;line-height:11px;color:#111;font-weight:400;white-space:nowrap;font-style:italic;transform-origin:0 0;">6</span>
<span style="transform:scaleX(0.9633);position:absolute;left:882.15px;top:586.51px;font-family:'Liberation Sans', sans-serif;font-size:11px;line-height:11px;color:#111;font-weight:400;white-space:nowrap;font-style:italic;transform-origin:0 0;">9</span>
<span style="transform:scaleX(0.9633);position:absolute;left:957.4499999999999px;top:586.51px;font-family:'Liberation Sans', sans-serif;font-size:11px;line-height:11px;color:#111;font-weight:400;white-space:nowrap;font-style:italic;transform-origin:0 0;">7</span>
<span style="transform:scaleX(0.9633);position:absolute;left:1030.0px;top:586.51px;font-family:'Liberation Sans', sans-serif;font-size:11px;line-height:11px;color:#111;font-weight:400;white-space:nowrap;font-style:italic;transform-origin:0 0;">20</span>
<span style="transform:scaleX(0.9633);position:absolute;left:1105.3px;top:586.51px;font-family:'Liberation Sans', sans-serif;font-size:11px;line-height:11px;color:#111;font-weight:400;white-space:nowrap;font-style:italic;transform-origin:0 0;">16</span>
<span style="transform:scaleX(0.9804);position:absolute;left:512.2px;top:636.21px;font-family:'Liberation Sans', sans-serif;font-size:11px;line-height:11px;color:#111;font-weight:700;white-space:nowrap;font-style:italic;transform-origin:0 0;">681</span>
<span style="transform:scaleX(0.9804);position:absolute;left:575.0px;top:636.21px;font-family:'Liberation Sans', sans-serif;font-size:11px;line-height:11px;color:#111;font-weight:700;white-space:nowrap;font-style:italic;transform-origin:0 0;">447</span>
<span style="transform:scaleX(0.9804);position:absolute;left:650.0px;top:636.21px;font-family:'Liberation Sans', sans-serif;font-size:11px;line-height:11px;color:#111;font-weight:700;white-space:nowrap;font-style:italic;transform-origin:0 0;">228</span>
<span style="transform:scaleX(0.9804);position:absolute;left:725.5px;top:636.21px;font-family:'Liberation Sans', sans-serif;font-size:11px;line-height:11px;color:#111;font-weight:700;white-space:nowrap;font-style:italic;transform-origin:0 0;">324</span>
<span style="transform:scaleX(0.9804);position:absolute;left:801.0px;top:636.21px;font-family:'Liberation Sans', sans-serif;font-size:11px;line-height:11px;color:#111;font-weight:700;white-space:nowrap;font-style:italic;transform-origin:0 0;">182</span>
<span style="transform:scaleX(0.9796);position:absolute;left:879.1px;top:636.21px;font-family:'Liberation Sans', sans-serif;font-size:11px;line-height:11px;color:#111;font-weight:700;white-space:nowrap;font-style:italic;transform-origin:0 0;">47</span>
<span style="transform:scaleX(0.9796);position:absolute;left:954.4px;top:636.21px;font-family:'Liberation Sans', sans-serif;font-size:11px;line-height:11px;color:#111;font-weight:700;white-space:nowrap;font-style:italic;transform-origin:0 0;">38</span>
<span style="transform:scaleX(0.9804);position:absolute;left:1026.9px;top:636.21px;font-family:'Liberation Sans', sans-serif;font-size:11px;line-height:11px;color:#111;font-weight:700;white-space:nowrap;font-style:italic;transform-origin:0 0;">214</span>
<span style="transform:scaleX(0.9804);position:absolute;left:1102.2px;top:636.21px;font-family:'Liberation Sans', sans-serif;font-size:11px;line-height:11px;color:#111;font-weight:700;white-space:nowrap;font-style:italic;transform-origin:0 0;">178</span>
<span style="transform:scaleX(1.0531);position:absolute;left:1150px;top:659.91px;font-family:'Liberation Sans', sans-serif;font-size:11px;line-height:11px;color:#222;font-weight:400;white-space:nowrap;font-style:normal;transform-origin:0 0;">19</span>
<svg style="position:absolute;left:642px;top:392px;" width="7" height="14" viewBox="0 0 7 14"><path d="M1 1 Q3.5 1 3.5 3 L3.5 11 Q3.5 13 1 13 M6 1 Q3.5 1 3.5 3 M6 13 Q3.5 13 3.5 11" fill="none" stroke="#222" stroke-width="0.9"/></svg>
<svg style="position:absolute;left:668px;top:264px;" width="68" height="2" viewBox="0 0 68 2"><polyline points="0,0.3 2,1.5 4,0.3 6,1.5 8,0.3 10,1.5 12,0.3 14,1.5 16,0.3 18,1.5 20,0.3 22,1.5 24,0.3 26,1.5 28,0.3 30,1.5 32,0.3 34,1.5 36,0.3 38,1.5 40,0.3 42,1.5 44,0.3 46,1.5 48,0.3 50,1.5 52,0.3 54,1.5 56,0.3 58,1.5 60,0.3 62,1.5 64,0.3 66,1.5" fill="none" stroke="#e0302a" stroke-width="0.7"/></svg>
<svg style="position:absolute;left:740px;top:264px;" width="93" height="2" viewBox="0 0 93 2"><polyline points="0,0.3 2,1.5 4,0.3 6,1.5 8,0.3 10,1.5 12,0.3 14,1.5 16,0.3 18,1.5 20,0.3 22,1.5 24,0.3 26,1.5 28,0.3 30,1.5 32,0.3 34,1.5 36,0.3 38,1.5 40,0.3 42,1.5 44,0.3 46,1.5 48,0.3 50,1.5 52,0.3 54,1.5 56,0.3 58,1.5 60,0.3 62,1.5 64,0.3 66,1.5 68,0.3 70,1.5 72,0.3 74,1.5 76,0.3 78,1.5 80,0.3 82,1.5 84,0.3 86,1.5 88,0.3 90,1.5 92,0.3" fill="none" stroke="#e0302a" stroke-width="0.7"/></svg>
<svg style="position:absolute;left:661px;top:280px;" width="30" height="2" viewBox="0 0 30 2"><polyline points="0,0.3 2,1.5 4,0.3 6,1.5 8,0.3 10,1.5 12,0.3 14,1.5 16,0.3 18,1.5 20,0.3 22,1.5 24,0.3 26,1.5 28,0.3" fill="none" stroke="#e0302a" stroke-width="0.7"/></svg>
<svg style="position:absolute;left:694px;top:280px;" width="44" height="2" viewBox="0 0 44 2"><polyline points="0,0.3 2,1.5 4,0.3 6,1.5 8,0.3 10,1.5 12,0.3 14,1.5 16,0.3 18,1.5 20,0.3 22,1.5 24,0.3 26,1.5 28,0.3 30,1.5 32,0.3 34,1.5 36,0.3 38,1.5 40,0.3 42,1.5" fill="none" stroke="#e0302a" stroke-width="0.7"/></svg>
<svg style="position:absolute;left:795px;top:280px;" width="29" height="2" viewBox="0 0 29 2"><polyline points="0,0.3 2,1.5 4,0.3 6,1.5 8,0.3 10,1.5 12,0.3 14,1.5 16,0.3 18,1.5 20,0.3 22,1.5 24,0.3 26,1.5 28,0.3" fill="none" stroke="#e0302a" stroke-width="0.7"/></svg>
<svg style="position:absolute;left:574px;top:420px;" width="20" height="2" viewBox="0 0 20 2"><polyline points="0,0.3 2,1.5 4,0.3 6,1.5 8,0.3 10,1.5 12,0.3 14,1.5 16,0.3 18,1.5" fill="none" stroke="#e0302a" stroke-width="0.7"/></svg>
<svg style="position:absolute;left:649px;top:420px;" width="20" height="2" viewBox="0 0 20 2"><polyline points="0,0.3 2,1.5 4,0.3 6,1.5 8,0.3 10,1.5 12,0.3 14,1.5 16,0.3 18,1.5" fill="none" stroke="#e0302a" stroke-width="0.7"/></svg>
<svg style="position:absolute;left:724px;top:420px;" width="20" height="2" viewBox="0 0 20 2"><polyline points="0,0.3 2,1.5 4,0.3 6,1.5 8,0.3 10,1.5 12,0.3 14,1.5 16,0.3 18,1.5" fill="none" stroke="#e0302a" stroke-width="0.7"/></svg>
<svg style="position:absolute;left:800px;top:420px;" width="20" height="2" viewBox="0 0 20 2"><polyline points="0,0.3 2,1.5 4,0.3 6,1.5 8,0.3 10,1.5 12,0.3 14,1.5 16,0.3 18,1.5" fill="none" stroke="#e0302a" stroke-width="0.7"/></svg>
<svg style="position:absolute;left:791px;top:342px;" width="28" height="2" viewBox="0 0 28 2"><polyline points="0,0.3 2,1.5 4,0.3 6,1.5 8,0.3 10,1.5 12,0.3 14,1.5 16,0.3 18,1.5 20,0.3 22,1.5 24,0.3 26,1.5" fill="none" stroke="#e0302a" stroke-width="0.7"/></svg>
</div>
<div style="position:absolute;left:141.3px;top:484.4px;width:132.6px;height:75.0px;background:#fff;box-shadow:0 0 0 0.7px #c9c9c9;"></div>
<span style="transform:scaleX(0.7128);position:absolute;left:169.5px;top:486.73px;font-family:'Liberation Sans', sans-serif;font-size:3.4px;line-height:3.4px;color:#c85a5a;font-weight:400;white-space:nowrap;font-style:normal;transform-origin:0 0;">СПЕЦІАЛЬНОСТІ, ЗА ЯКИМИ ЗДОБУВАЧІ ФПО НАВЧАЛИСЬ ДФЗО</span>
<div style="position:absolute;left:145.6px;top:491.4px;width:125.5px;height:62.2px;background:#e6f0de;"></div>
<div style="position:absolute;left:145.6px;top:491.4px;width:125.5px;height:3.8px;background:#d5e6c3;"></div>
<div style="position:absolute;left:155px;top:492.9px;width:34px;height:0.8px;background:#9aa8d8;"></div>
<div style="position:absolute;left:218px;top:492.9px;width:11px;height:0.8px;background:#9aa8d8;"></div>
<div style="position:absolute;left:235px;top:492.9px;width:14px;height:0.8px;background:#9aa8d8;"></div>
<div style="position:absolute;left:255px;top:492.9px;width:14px;height:0.8px;background:#9aa8d8;"></div>
<div style="position:absolute;left:146.5px;top:497.1px;width:64.5px;height:0.9px;background:#b2bfe6;"></div>
<div style="position:absolute;left:146.5px;top:501.20000000000005px;width:31.5px;height:0.9px;background:#b2bfe6;"></div>
<div style="position:absolute;left:146.5px;top:505.3px;width:30.5px;height:0.9px;background:#b2bfe6;"></div>
<div style="position:absolute;left:146.5px;top:509.1px;width:25.5px;height:0.9px;background:#b2bfe6;"></div>
<div style="position:absolute;left:146.5px;top:513.2px;width:21.5px;height:0.9px;background:#b2bfe6;"></div>
<div style="position:absolute;left:146.5px;top:517.9px;width:68.5px;height:0.9px;background:#b2bfe6;"></div>
<div style="position:absolute;left:146.5px;top:522.0px;width:39.5px;height:0.9px;background:#b2bfe6;"></div>
<div style="position:absolute;left:146.5px;top:526.0px;width:30.5px;height:0.9px;background:#b2bfe6;"></div>
<div style="position:absolute;left:146.5px;top:530.0px;width:35.5px;height:0.9px;background:#b2bfe6;"></div>
<div style="position:absolute;left:146.5px;top:534.0px;width:54.5px;height:0.9px;background:#b2bfe6;"></div>
<div style="position:absolute;left:146.5px;top:536.8000000000001px;width:15.5px;height:0.9px;background:#b2bfe6;"></div>
<div style="position:absolute;left:146.5px;top:540.8000000000001px;width:17.5px;height:0.9px;background:#b2bfe6;"></div>
<div style="position:absolute;left:146.5px;top:544.8000000000001px;width:64.5px;height:0.9px;background:#b2bfe6;"></div>
<div style="position:absolute;left:146.5px;top:547.7px;width:59.5px;height:0.9px;background:#b2bfe6;"></div>
<div style="position:absolute;left:146.5px;top:551.8000000000001px;width:28.5px;height:0.9px;background:#b2bfe6;"></div>
<div style="position:absolute;left:145.6px;top:499.6px;width:125.5px;height:0.6px;background:#f4f8f0;"></div>
<div style="position:absolute;left:145.6px;top:503.6px;width:125.5px;height:0.6px;background:#f4f8f0;"></div>
<div style="position:absolute;left:145.6px;top:507.6px;width:125.5px;height:0.6px;background:#f4f8f0;"></div>
<div style="position:absolute;left:145.6px;top:511.5px;width:125.5px;height:0.6px;background:#f4f8f0;"></div>
<div style="position:absolute;left:145.6px;top:516px;width:125.5px;height:0.6px;background:#f4f8f0;"></div>
<div style="position:absolute;left:145.6px;top:520.3px;width:125.5px;height:0.6px;background:#f4f8f0;"></div>
<div style="position:absolute;left:145.6px;top:524.4px;width:125.5px;height:0.6px;background:#f4f8f0;"></div>
<div style="position:absolute;left:145.6px;top:528.4px;width:125.5px;height:0.6px;background:#f4f8f0;"></div>
<div style="position:absolute;left:145.6px;top:532.4px;width:125.5px;height:0.6px;background:#f4f8f0;"></div>
<div style="position:absolute;left:145.6px;top:539.2px;width:125.5px;height:0.6px;background:#f4f8f0;"></div>
<div style="position:absolute;left:145.6px;top:543.2px;width:125.5px;height:0.6px;background:#f4f8f0;"></div>
<div style="position:absolute;left:145.6px;top:550.2px;width:125.5px;height:0.6px;background:#f4f8f0;"></div>
<div style="position:absolute;left:217.4px;top:491.4px;width:0.6px;height:62.2px;background:#f4f8f0;"></div>
<div style="position:absolute;left:235.9px;top:491.4px;width:0.6px;height:62.2px;background:#f4f8f0;"></div>
<div style="position:absolute;left:254.2px;top:491.4px;width:0.6px;height:62.2px;background:#f4f8f0;"></div>
<div style="position:absolute;left:226px;top:496.7px;width:2.2px;height:1.6px;background:#333;"></div>
<div style="position:absolute;left:226px;top:500.8px;width:2.2px;height:1.6px;background:#333;"></div>
<div style="position:absolute;left:226px;top:504.9px;width:2.2px;height:1.6px;background:#333;"></div>
<div style="position:absolute;left:245px;top:497.1px;width:2.5px;height:0.8px;background:#b8c2e2;"></div>
<div style="position:absolute;left:262px;top:497.1px;width:3px;height:0.8px;background:#b8c2e2;"></div>
<div style="position:absolute;left:245px;top:501.20000000000005px;width:2.5px;height:0.8px;background:#b8c2e2;"></div>
<div style="position:absolute;left:262px;top:501.20000000000005px;width:3px;height:0.8px;background:#b8c2e2;"></div>
<div style="position:absolute;left:245px;top:505.3px;width:2.5px;height:0.8px;background:#b8c2e2;"></div>
<div style="position:absolute;left:262px;top:505.3px;width:3px;height:0.8px;background:#b8c2e2;"></div>
<div style="position:absolute;left:245px;top:509.1px;width:2.5px;height:0.8px;background:#b8c2e2;"></div>
<div style="position:absolute;left:262px;top:509.1px;width:3px;height:0.8px;background:#b8c2e2;"></div>
<div style="position:absolute;left:245px;top:513.2px;width:2.5px;height:0.8px;background:#b8c2e2;"></div>
<div style="position:absolute;left:262px;top:513.2px;width:3px;height:0.8px;background:#b8c2e2;"></div>
<div style="position:absolute;left:245px;top:517.9px;width:2.5px;height:0.8px;background:#b8c2e2;"></div>
<div style="position:absolute;left:262px;top:517.9px;width:3px;height:0.8px;background:#b8c2e2;"></div>
<div style="position:absolute;left:245px;top:522.0px;width:2.5px;height:0.8px;background:#b8c2e2;"></div>
<div style="position:absolute;left:262px;top:522.0px;width:3px;height:0.8px;background:#b8c2e2;"></div>
<div style="position:absolute;left:245px;top:526.0px;width:2.5px;height:0.8px;background:#b8c2e2;"></div>
<div style="position:absolute;left:262px;top:526.0px;width:3px;height:0.8px;background:#b8c2e2;"></div>
<div style="position:absolute;left:245px;top:530.0px;width:2.5px;height:0.8px;background:#b8c2e2;"></div>
<div style="position:absolute;left:262px;top:530.0px;width:3px;height:0.8px;background:#b8c2e2;"></div>
<div style="position:absolute;left:245px;top:534.0px;width:2.5px;height:0.8px;background:#b8c2e2;"></div>
<div style="position:absolute;left:262px;top:534.0px;width:3px;height:0.8px;background:#b8c2e2;"></div>
<div style="position:absolute;left:245px;top:536.8000000000001px;width:2.5px;height:0.8px;background:#b8c2e2;"></div>
<div style="position:absolute;left:262px;top:536.8000000000001px;width:3px;height:0.8px;background:#b8c2e2;"></div>
<div style="position:absolute;left:245px;top:540.8000000000001px;width:2.5px;height:0.8px;background:#b8c2e2;"></div>
<div style="position:absolute;left:262px;top:540.8000000000001px;width:3px;height:0.8px;background:#b8c2e2;"></div>
<div style="position:absolute;left:245px;top:544.8000000000001px;width:2.5px;height:0.8px;background:#b8c2e2;"></div>
<div style="position:absolute;left:262px;top:544.8000000000001px;width:3px;height:0.8px;background:#b8c2e2;"></div>
<div style="position:absolute;left:245px;top:547.7px;width:2.5px;height:0.8px;background:#b8c2e2;"></div>
<div style="position:absolute;left:262px;top:547.7px;width:3px;height:0.8px;background:#b8c2e2;"></div>
<div style="position:absolute;left:245px;top:551.8000000000001px;width:2.5px;height:0.8px;background:#b8c2e2;"></div>
<div style="position:absolute;left:262px;top:551.8000000000001px;width:3px;height:0.8px;background:#b8c2e2;"></div>
<div style="position:absolute;left:141.3px;top:571.3px;width:132.6px;height:74.0px;background:#fff;box-shadow:0 0 0 0.7px #c9c9c9;"></div>
<span style="transform:scaleX(0.9063);position:absolute;left:153.1px;top:573.74px;font-family:'Liberation Sans', sans-serif;font-size:3.6px;line-height:3.6px;color:#b8323a;font-weight:400;white-space:nowrap;font-style:normal;transform-origin:0 0;">ПОСАДИ, ЯКІ ОБІЙМАЛИ ЗДОБУВАЧІ ФПО В КОМПАНІЯХ ПАРТНЕРАХ</span>
<div style="position:absolute;left:144.8px;top:578.8px;width:125.8px;height:63.9px;background:#e6f0de;"></div>
<div style="position:absolute;left:144.8px;top:578.8px;width:125.8px;height:4px;background:#d5e6c3;"></div>
<div style="position:absolute;left:173px;top:580.4px;width:22px;height:0.8px;background:#9aa8d8;"></div>
<div style="position:absolute;left:243px;top:580.4px;width:12px;height:0.8px;background:#9aa8d8;"></div>
<div style="position:absolute;left:225.3px;top:578.8px;width:0.6px;height:63.9px;background:#f4f8f0;"></div>
<div style="position:absolute;left:146.5px;top:584.9px;width:60.19999999999999px;height:0.9px;background:#b2bfe6;"></div>
<div style="position:absolute;left:146.5px;top:588.7px;width:29.0px;height:0.9px;background:#b2bfe6;"></div>
<div style="position:absolute;left:146.5px;top:597.8000000000001px;width:57.19999999999999px;height:0.9px;background:#b2bfe6;"></div>
<div style="position:absolute;left:146.5px;top:601.8000000000001px;width:28.5px;height:0.9px;background:#b2bfe6;"></div>
<div style="position:absolute;left:146.5px;top:608.3000000000001px;width:20.19999999999999px;height:0.9px;background:#b2bfe6;"></div>
<div style="position:absolute;left:146.5px;top:612.9px;width:64.80000000000001px;height:0.9px;background:#b2bfe6;"></div>
<div style="position:absolute;left:146.5px;top:617.0px;width:29.30000000000001px;height:0.9px;background:#b2bfe6;"></div>
<div style="position:absolute;left:146.5px;top:620.4px;width:33.0px;height:0.9px;background:#b2bfe6;"></div>
<div style="position:absolute;left:146.5px;top:624.2px;width:65.80000000000001px;height:0.9px;background:#b2bfe6;"></div>
<div style="position:absolute;left:146.5px;top:630.8000000000001px;width:20.19999999999999px;height:0.9px;background:#b2bfe6;"></div>
<div style="position:absolute;left:146.5px;top:634.8000000000001px;width:74.5px;height:0.9px;background:#b2bfe6;"></div>
<div style="position:absolute;left:146.5px;top:637.6px;width:41.30000000000001px;height:0.9px;background:#b2bfe6;"></div>
<div style="position:absolute;left:146.5px;top:641.1px;width:25.5px;height:0.9px;background:#b2bfe6;"></div>
<div style="position:absolute;left:227px;top:584.9px;width:15.199999999999989px;height:0.9px;background:#b2bfe6;"></div>
<div style="position:absolute;left:227px;top:588.7px;width:36.39999999999998px;height:0.9px;background:#b2bfe6;"></div>
<div style="position:absolute;left:227px;top:591.6px;width:36.39999999999998px;height:0.9px;background:#b2bfe6;"></div>
<div style="position:absolute;left:227px;top:593.7px;width:13px;height:0.9px;background:#b2bfe6;"></div>
<div style="position:absolute;left:227px;top:597.8000000000001px;width:31.5px;height:0.9px;background:#b2bfe6;"></div>
<div style="position:absolute;left:227px;top:601.8000000000001px;width:42.39999999999998px;height:0.9px;background:#b2bfe6;"></div>
<div style="position:absolute;left:227px;top:604.6px;width:23px;height:0.9px;background:#b2bfe6;"></div>
<div style="position:absolute;left:227px;top:608.3000000000001px;width:7.699999999999989px;height:0.9px;background:#b2bfe6;"></div>
<div style="position:absolute;left:227px;top:612.9px;width:13.699999999999989px;height:0.9px;background:#b2bfe6;"></div>
<div style="position:absolute;left:227px;top:617.0px;width:23.5px;height:0.9px;background:#b2bfe6;"></div>
<div style="position:absolute;left:227px;top:620.4px;width:24.30000000000001px;height:0.9px;background:#b2bfe6;"></div>
<div style="position:absolute;left:227px;top:624.2px;width:42.69999999999999px;height:0.9px;background:#b2bfe6;"></div>
<div style="position:absolute;left:227px;top:627.2px;width:18px;height:0.9px;background:#b2bfe6;"></div>
<div style="position:absolute;left:227px;top:630.8000000000001px;width:29.600000000000023px;height:0.9px;background:#b2bfe6;"></div>
<div style="position:absolute;left:227px;top:634.8000000000001px;width:7.699999999999989px;height:0.9px;background:#b2bfe6;"></div>
<div style="position:absolute;left:227px;top:641.1px;width:9.199999999999989px;height:0.9px;background:#b2bfe6;"></div>
<div style="position:absolute;left:144.8px;top:587px;width:125.8px;height:0.6px;background:#f4f8f0;"></div>
<div style="position:absolute;left:144.8px;top:596.3px;width:125.8px;height:0.6px;background:#f4f8f0;"></div>
<div style="position:absolute;left:144.8px;top:600px;width:125.8px;height:0.6px;background:#f4f8f0;"></div>
<div style="position:absolute;left:144.8px;top:606.8px;width:125.8px;height:0.6px;background:#f4f8f0;"></div>
<div style="position:absolute;left:144.8px;top:611px;width:125.8px;height:0.6px;background:#f4f8f0;"></div>
<div style="position:absolute;left:144.8px;top:615.4px;width:125.8px;height:0.6px;background:#f4f8f0;"></div>
<div style="position:absolute;left:144.8px;top:619px;width:125.8px;height:0.6px;background:#f4f8f0;"></div>
<div style="position:absolute;left:144.8px;top:622.7px;width:125.8px;height:0.6px;background:#f4f8f0;"></div>
<div style="position:absolute;left:144.8px;top:629.5px;width:125.8px;height:0.6px;background:#f4f8f0;"></div>
<div style="position:absolute;left:144.8px;top:633.2px;width:125.8px;height:0.6px;background:#f4f8f0;"></div>
<div style="position:absolute;left:144.8px;top:639.8px;width:125.8px;height:0.6px;background:#f4f8f0;"></div>
<div style="position:absolute;left:141.3px;top:657.7px;width:132.3px;height:17.3px;background:#fff;box-shadow:0 0 0 0.7px #c9c9c9;"></div>
<span style="transform:scaleX(0.9423);position:absolute;left:157.6px;top:664.24px;font-family:'Liberation Sans', sans-serif;font-size:3.8px;line-height:3.8px;color:#c03a3a;font-weight:400;white-space:nowrap;font-style:normal;transform-origin:0 0;">РОЛАНЕ ПІДПРИЄМСТВ-ПАРТНЕРІВ, ЯКІ ПРОДОВЖУЮТЬ</span>
<span style="transform:scaleX(1.0767);position:absolute;left:157.6px;top:669.44px;font-family:'Liberation Sans', sans-serif;font-size:3.8px;line-height:3.8px;color:#c03a3a;font-weight:400;white-space:nowrap;font-style:normal;transform-origin:0 0;">НАВЧАТИ ЗДОБУВАЧІВ ФПО, 2022 р.</span>
<span style="transform:scaleX(1.0907);position:absolute;left:230px;top:670.42px;font-family:'Liberation Sans', sans-serif;font-size:2.4px;line-height:2.4px;color:#c85a5a;font-weight:400;white-space:nowrap;font-style:normal;transform-origin:0 0;">(за результатами анкет)</span>
</body></html>
